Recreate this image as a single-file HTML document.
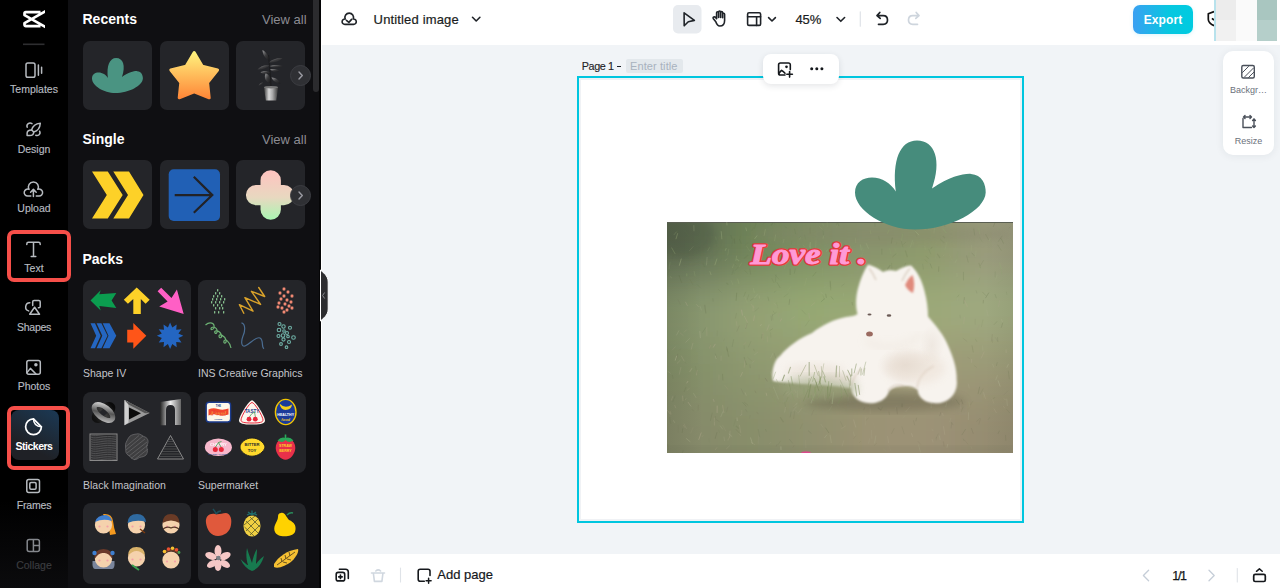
<!DOCTYPE html>
<html><head><meta charset="utf-8">
<style>
*{margin:0;padding:0;box-sizing:border-box}
html,body{width:1280px;height:588px;overflow:hidden;font-family:"Liberation Sans",sans-serif;background:#f1f4f7}
.a{position:absolute}
svg{display:block;overflow:hidden}
#side{z-index:5;left:0;top:0;width:68px;height:588px;background:linear-gradient(#000 0,#000 500px,#0b0b0d 588px)}
#panel{left:68px;top:0;width:251px;height:588px;background:#0f0f12}
.nl{position:absolute;left:0;width:68px;text-align:center;font-size:10.5px;color:#b7bbc0;line-height:12px;-webkit-text-stroke:0.15px currentColor}
.card{position:absolute;width:69px;height:69px;background:#242529;border-radius:7px;overflow:hidden}
.pk{position:absolute;width:108px;height:81px;background:#242529;border-radius:8px;overflow:hidden}
.ht{position:absolute;left:82px;font-size:14px;font-weight:bold;color:#fff;line-height:16px}
.va{position:absolute;left:262px;font-size:13px;color:#8c8c93;line-height:15px}
.pl{position:absolute;font-size:10.5px;color:#c4c5ca;line-height:12px;white-space:nowrap}
.nxt{position:absolute;width:21px;height:21px;border-radius:50%;background:#2f3034;border:1px solid #3c3d42}
#top{left:321px;top:0;width:959px;height:44.6px;background:#fff}
#bot{left:321px;top:554px;width:959px;height:34px;background:#fff}
</style></head><body>
<div id="side" class="a">
  <!-- logo -->
  <svg class="a" style="left:0;top:0" width="68" height="50" viewBox="0 0 68 50">
    <defs><clipPath id="lgc"><rect x="20" y="5" width="24.9" height="30"/></clipPath></defs><path clip-path="url(#lgc)" d="M40.5 12.1H25.9a1.4 1.4 0 0 0-1.4 1.4V15.1L46.5 27.6M40.5 26.1H25.9a1.4 1.4 0 0 1-1.4-1.4V23.1L46.5 10.6" fill="none" stroke="#fff" stroke-width="2.7" stroke-linejoin="round"/>
    <rect x="23" y="43.5" width="21.5" height="1.6" fill="#2e2e30"/>
  </svg>
  <!-- nav icons -->
  <svg class="a" style="left:0;top:0" width="68" height="588" viewBox="0 0 68 588" fill="none" stroke="#b7bbc0" stroke-width="1.5" stroke-linecap="round" stroke-linejoin="round">
    <!-- templates -->
    <rect x="26" y="63" width="9" height="14.3" rx="1.8"/>
    <path d="M38.4 65V75.3M41.6 67.3V73.2"/>
    <!-- design -->
    <path d="M27.2 127.2Q26.3 125 28.2 123.6Q30 122.5 32 123.6"/>
    <path d="M39.6 131.2Q40.8 133.6 38.8 135Q37.4 136 35.8 135.3"/>
    <path d="M40.3 123.2C36.2 123.6 32.6 126.2 31.6 129.9L33.7 132C37.4 131 40 127.4 40.3 123.2Z"/>
    <path d="M31.6 129.9C29 129.9 27.1 131 27.1 133.2V135.6H29.6C32 135.6 33.7 134.2 33.7 132"/>
    <!-- upload -->
    <path d="M30.8 196.1H27.7A3.5 3.5 0 1 1 29.05 189.37A5 5 0 1 1 37.75 189.37A3.5 3.5 0 1 1 39.1 196.1H36.3"/>
    <path d="M33.4 196.5V189.5M30.6 192.2L33.4 189.4L36.2 192.2"/>
    <!-- text -->
    <path d="M26.8 244.6V243.9Q26.8 242.3 28.4 242.3H38.6Q40.2 242.3 40.2 243.9V244.6M33.5 242.3V256.4M31.2 256.4H35.8"/>
    <!-- shapes -->
    <path d="M29.8 302.7A4.2 4.2 0 0 0 28.6 310.9"/>
    <path d="M32.7 305.6V301.8Q32.7 300.4 34.1 300.4H38.8Q40.2 300.4 40.2 301.8V306.4Q40.2 307.8 38.8 307.8H38.4"/>
    <path d="M34.6 307.2L39.5 314.3H29.7Z"/>
    <!-- photos -->
    <rect x="26.8" y="360.6" width="13.5" height="13.7" rx="2"/>
    <path d="M27 372.6L30.4 368.4L36.2 374.2"/>
    <circle cx="35.9" cy="364.8" r="1.75" fill="#b7bbc0" stroke="none"/>
    <!-- frames -->
    <rect x="26.8" y="479.5" width="12.7" height="13" rx="2"/>
    <rect x="29.8" y="482.6" width="6.3" height="6.6" rx="1.2"/>
  </svg>
  <div class="nl" style="top:83px">Templates</div>
  <div class="nl" style="top:143px">Design</div>
  <div class="nl" style="top:202px">Upload</div>
  <div class="nl" style="top:262px">Text</div>
  <div class="nl" style="top:320.8px;letter-spacing:-0.3px">Shapes</div>
  <div class="nl" style="top:380.2px">Photos</div>
  <!-- stickers active -->
  <div class="a" style="left:11px;top:410px;width:48px;height:50px;border-radius:8px;background:linear-gradient(30deg,#1f2126 30%,#1b3955 100%)"></div>
  <svg class="a" style="left:0;top:400px" width="68" height="60" viewBox="0 400 68 60" fill="none" stroke="#fff" stroke-width="1.7" stroke-linecap="round" stroke-linejoin="round">
    <path d="M41.4 426.8A7.9 7.9 0 1 1 33.5 418.9L41.4 426.8"/>
    <path d="M33.5 418.9Q33.6 426 41.4 426.8" stroke-width="1.5"/>
  </svg>
  <div class="nl" style="top:440px;color:#fff;font-weight:bold;font-size:10.5px;letter-spacing:-0.5px;-webkit-text-stroke:0">Stickers</div>
  <div class="nl" style="top:499px;letter-spacing:-0.2px">Frames</div>
  <!-- collage -->
  <svg class="a" style="left:0;top:530px" width="68" height="30" viewBox="0 530 68 30" fill="none" stroke="#85888d" stroke-width="1.5" stroke-linejoin="round">
    <rect x="27.2" y="539.4" width="12.2" height="12.1" rx="2"/>
    <path d="M33.4 539.6V551.4M33.4 545.6H39.3"/>
  </svg>
  <div class="nl" style="top:558.8px;color:#3c3d40">Collage</div>
  
  <!-- red highlight boxes -->
  <div class="a" style="left:7px;top:230px;width:64px;height:52px;border:4px solid #f64f49;border-radius:7px"></div>
  <div class="a" style="left:7px;top:406px;width:63px;height:63.6px;border:4px solid #f64f49;border-radius:7px"></div>
</div>

<div id="panel" class="a"></div>

<!-- scrollbar -->
<div class="a" style="left:313px;top:0;width:6px;height:92px;background:#2b2b2e;border-radius:0 0 3px 3px"></div>
<div class="a" style="left:319px;top:0;width:2px;height:588px;background:#050506"></div>
<!-- recents -->
<div class="card" style="left:83px;top:41px">
  <svg width="69" height="69" viewBox="0 0 131 89" style="position:absolute;left:9px;top:16.8px;width:51px;height:35px" preserveAspectRatio="none">
    <path d="M40.8 50.9C37 20 45 0 62 0C80 0 87 20 77 48C95 36 108 33 116 33.4C127 34 131 44 130.7 52C130 70 95 89 60 89C30 89 0 70 0 52C0 42 8 37 17 37C27 37 36 43 40.8 50.9Z" fill="#4a9482"/>
  </svg>
</div>
<div class="card" style="left:160px;top:41px">
  <svg class="a" style="left:0;top:0" width="69" height="69" viewBox="0 0 69 69">
    <defs><linearGradient id="stg" x1="0" y1="0" x2="0" y2="1"><stop offset="0" stop-color="#fff27c"/><stop offset=".45" stop-color="#ffc15e"/><stop offset="1" stop-color="#ff8838"/></linearGradient></defs>
    <path d="M34.2 11.5L42.3 25.2L57.6 29L47.6 41.5L49.2 56.8L34.2 50.8L19.2 56.8L20.8 41.5L10.8 29L26.1 25.2Z" fill="url(#stg)" stroke="url(#stg)" stroke-width="3" stroke-linejoin="round"/>
  </svg>
</div>
<div class="card" style="left:236px;top:41px">
  <svg class="a" style="left:0;top:0" width="69" height="69" viewBox="0 0 69 69">
    <defs>
      <linearGradient id="pot" x1="0" y1="0" x2="1" y2="0"><stop offset="0" stop-color="#3a3a3a"/><stop offset=".35" stop-color="#d8d8d8"/><stop offset=".6" stop-color="#aaa"/><stop offset="1" stop-color="#333"/></linearGradient>
      <linearGradient id="lf" x1="0" y1="0" x2="1" y2="1"><stop offset="0" stop-color="#9a9a9c"/><stop offset=".5" stop-color="#3a3a3c"/><stop offset="1" stop-color="#1a1a1c"/></linearGradient>
    </defs>
    <path d="M35 46C34.5 36 33.5 24 32.5 14" stroke="#1c1c1e" stroke-width="1.2" fill="none"/>
    <g fill="url(#lf)">
      <path d="M26.5 9C30 11 33 15 33 19.5C29.5 18 26.5 13 26.5 9Z"/>
      <path d="M33 21.5C36 18 42 16.5 46.5 17C43.5 20.5 37.5 22 33 21.5Z"/>
      <path d="M21.5 28.5C24.5 25 29.5 23.5 33.5 24.5C30 27.5 25.5 29 21.5 28.5Z"/>
      <path d="M33.5 25C37 23.5 43 23.5 47 25C43 27 37.5 27 33.5 25Z"/>
      <path d="M24.5 31.5C27 29.5 31 29.5 34 31.5C31 33.5 27.5 33.5 24.5 31.5Z"/>
      <path d="M34 28.5C37 27.5 41 28 43.5 30C40.5 31.5 36.5 31 34 28.5Z"/>
      <path d="M29.5 32.5C33 33 35 37 34 42C30.5 41.5 27.5 37.5 29.5 32.5Z"/>
      <path d="M35.5 36.5C39 36 43 39 44.5 42.5C40.5 42.5 37 40 35.5 36.5Z"/>
      <path d="M22.5 44.5C23.5 42.5 25 41.5 27 41.5C26 43.5 24.5 44.5 22.5 44.5Z"/>
    </g>
    <path d="M27.9 46H42.2L40.3 59.6H29.8Z" fill="url(#pot)"/>
    <ellipse cx="35" cy="46.2" rx="7.1" ry="1.3" fill="#777"/>
  </svg>
</div>
<div class="nxt" style="left:290px;top:64.5px"><svg width="19" height="19" viewBox="0 0 19 19"><path d="M8 6L11.3 9.5L8 13" fill="none" stroke="#9b9ba3" stroke-width="1.4" stroke-linecap="round" stroke-linejoin="round"/></svg></div>
<!-- single -->
<div class="card" style="left:83px;top:160px">
  <svg class="a" style="left:0;top:0" width="69" height="69" viewBox="83 160 69 69">
    <path d="M92 171.6H107.8L122.7 195.1L107.8 218.6H92L106.8 195.1Z M113.3 171.6H129L143.5 195.1L129 218.6H113.3L128 195.1Z" fill="#fdd128"/>
  </svg>
</div>
<div class="card" style="left:160px;top:160px">
  <svg class="a" style="left:0;top:0" width="69" height="69" viewBox="160 160 69 69">
    <rect x="168.7" y="169.3" width="51.3" height="51.7" rx="5" fill="#2160b5"/>
    <path d="M174.7 195.1H212.5M193.8 176.8L212.3 195.1L193.8 212.8" fill="none" stroke="#222226" stroke-width="2.2"/>
  </svg>
</div>
<div class="card" style="left:236px;top:160px">
  <svg class="a" style="left:0;top:0" width="69" height="69" viewBox="236 160 69 69">
    <defs><linearGradient id="flw" x1="0" y1="0" x2="0" y2="1"><stop offset="0" stop-color="#ffc3c0"/><stop offset=".55" stop-color="#e8d8c0"/><stop offset="1" stop-color="#a9f7b2"/></linearGradient></defs>
    <path d="M260.5 180.5V180.5A10.2 10.2 0 0 1 280.9 180.5V185H284A10.1 10.1 0 0 1 284 205.2H280.9V209.5A10.2 10.2 0 0 1 260.5 209.5V205.2H256A10.1 10.1 0 0 1 256 185H260.5Z" fill="url(#flw)"/>
  </svg>
</div>
<div class="nxt" style="left:290px;top:184.5px"><svg width="19" height="19" viewBox="0 0 19 19"><path d="M8 6L11.3 9.5L8 13" fill="none" stroke="#9b9ba3" stroke-width="1.4" stroke-linecap="round" stroke-linejoin="round"/></svg></div>
<!-- packs -->
<div class="pk" style="left:83px;top:280px"><svg class="a" style="left:0;top:0" width="108" height="81" viewBox="0 0 108 81">
<polygon points="7.5,20.4 17.7,10.2 16.3,14.3 33.3,12.9 28.6,20.4 33.3,27.9 16.3,25.9 17.7,30.6" fill="#0b9d4f"/>
<polygon points="53.7,7.5 40.8,19.7 44.9,23.8 50.3,19 50.3,34 57.8,34 57.8,19 62.6,23.8 66.7,19.7" fill="#fdd128"/>
<polygon points="74.6,11.2 78.2,7.8 88.5,18 93.9,9.5 100.7,34 76.2,26.5 84.6,21.5" fill="#ff5fc5"/>
<path d="M7.5 43.3H12L17.7 55.8L12 68.3H7.5L13.2 55.8Z M13.6 43.3H18.4L24.5 55.8L18.4 68.3H13.6L19.3 55.8Z M19.7 43.3H26.5L33.3 55.8L26.5 68.3H19.7L25.5 55.8Z" fill="#2466c2"/>
<polygon points="44.2,49.7 50.3,49.7 50.3,42.9 63.3,55.8 50.3,68.7 50.3,62.6 44.2,62.6" fill="#ff5518"/>
<polygon points="87.1,42.6 89.3,47.5 93.7,44.4 93.2,49.7 98.5,49.2 95.4,53.6 100.3,55.8 95.4,58.0 98.5,62.4 93.2,61.9 93.7,67.2 89.3,64.1 87.1,69.0 84.9,64.1 80.5,67.2 81.0,61.9 75.7,62.4 78.8,58.0 73.9,55.8 78.8,53.6 75.7,49.2 81.0,49.7 80.5,44.4 84.9,47.5" fill="#2466c2"/>
</svg></div>
<div class="pk" style="left:198px;top:280px"><svg class="a" style="left:0;top:0" width="108" height="81" viewBox="0 0 108 81">
<g fill="#86c08e"><rect x="19" y="9" width="1.3" height="2.6" rx=".6"/><rect x="17" y="12" width="1.3" height="2.6" rx=".6"/><rect x="21" y="12" width="1.3" height="2.6" rx=".6"/><rect x="15" y="15" width="1.3" height="2.6" rx=".6"/><rect x="19" y="15" width="1.3" height="2.6" rx=".6"/><rect x="23" y="15" width="1.3" height="2.6" rx=".6"/><rect x="14" y="18" width="1.3" height="2.6" rx=".6"/><rect x="18" y="18" width="1.3" height="2.6" rx=".6"/><rect x="22" y="18" width="1.3" height="2.6" rx=".6"/><rect x="26" y="18" width="1.3" height="2.6" rx=".6"/><rect x="13" y="21" width="1.3" height="2.6" rx=".6"/><rect x="17" y="21" width="1.3" height="2.6" rx=".6"/><rect x="21" y="21" width="1.3" height="2.6" rx=".6"/><rect x="25" y="21" width="1.3" height="2.6" rx=".6"/><rect x="15" y="24" width="1.3" height="2.6" rx=".6"/><rect x="19" y="24" width="1.3" height="2.6" rx=".6"/><rect x="23" y="24" width="1.3" height="2.6" rx=".6"/><rect x="17" y="27" width="1.3" height="2.6" rx=".6"/><rect x="21" y="27" width="1.3" height="2.6" rx=".6"/><rect x="24" y="27" width="1.3" height="2.6" rx=".6"/><rect x="16" y="31" width="1.3" height="2.6" rx=".6"/><rect x="20" y="31" width="1.3" height="2.6" rx=".6"/><rect x="25" y="31" width="1.3" height="2.6" rx=".6"/></g>
<path d="M45.8 33.3L41.4 24.7L55 31.2L46.9 17.6L62.6 24.4L53.4 11.3L66.7 16.5L60.7 7.5" fill="none" stroke="#d9a22a" stroke-width="1.4" stroke-linejoin="round" stroke-linecap="round"/>
<g stroke="#f38a74" stroke-width="1.4" fill="none"><path d="M84.8 7.8L87.2 10.2M87.2 7.8L84.8 10.2"/><path d="M80.8 11.8L83.2 14.2M83.2 11.8L80.8 14.2"/><path d="M88.8 10.8L91.2 13.2M91.2 10.8L88.8 13.2"/><path d="M84.8 14.8L87.2 17.2M87.2 14.8L84.8 17.2"/><path d="M92.8 14.8L95.2 17.2M95.2 14.8L92.8 17.2"/><path d="M81.8 17.8L84.2 20.2M84.2 17.8L81.8 20.2"/><path d="M87.8 18.8L90.2 21.2M90.2 18.8L87.8 21.2"/><path d="M91.8 20.8L94.2 23.2M94.2 20.8L91.8 23.2"/><path d="M79.8 21.8L82.2 24.2M82.2 21.8L79.8 24.2"/><path d="M85.8 22.8L88.2 25.2M88.2 22.8L85.8 25.2"/><path d="M89.8 24.8L92.2 27.2M92.2 24.8L89.8 27.2"/><path d="M82.8 26.8L85.2 29.2M85.2 26.8L82.8 29.2"/><path d="M87.8 28.8L90.2 31.2M90.2 28.8L87.8 31.2"/><path d="M92.8 26.8L95.2 29.2M95.2 26.8L92.8 29.2"/><path d="M84.8 30.8L87.2 33.2M87.2 30.8L84.8 33.2"/><path d="M78.8 25.8L81.2 28.2M81.2 25.8L78.8 28.2"/></g>
<path d="M7.5 45C12 41 17 43 16 48C13 52 11 47 16 47C21 49 19 55 17 53C15 50 21 50 23 54C25 58 21 59 21 56C21 53 27 56 28 60C29 64 25 64 26 61C27 58 32 62 33 68" fill="none" stroke="#6cb073" stroke-width="1.2"/>
<path d="M43.5 42.9C48 44 47 52 45 56C43 61 43 67 47 66C52 64 58 56 62 58C66 60 63 67 66 68.7" fill="none" stroke="#4b6d92" stroke-width="1.2"/>
<g fill="none" stroke="#6fb0a6" stroke-width="1.1"><circle cx="81.5" cy="44" r="1.5"/><circle cx="85.5" cy="46.5" r="1.7"/><circle cx="92" cy="47.8" r="1.5"/><circle cx="81" cy="50" r="1.8"/><circle cx="86" cy="51" r="1.3"/><circle cx="89" cy="53" r="1.5"/><circle cx="80.5" cy="56" r="1.5"/><circle cx="85" cy="55.5" r="1.8"/><circle cx="90" cy="56.5" r="1.3"/><circle cx="95.5" cy="57.5" r="1.8"/><circle cx="85.5" cy="59.5" r="1.6"/><circle cx="91" cy="62" r="1.5"/><circle cx="83" cy="64" r="1.4"/><circle cx="88.5" cy="67.2" r="1.3"/></g>
</svg></div>
<div class="pl" style="left:83px;top:367.4px">Shape IV</div>
<div class="pl" style="left:198px;top:367.4px">INS Creative Graphics</div>
<div class="pk" style="left:83px;top:392px"><svg class="a" style="left:0;top:0" width="108" height="81" viewBox="0 0 108 81">
<defs>
<linearGradient id="g3a" x1="0" y1="0" x2="1" y2="1"><stop offset="0" stop-color="#d8d8d8"/><stop offset=".5" stop-color="#333"/><stop offset="1" stop-color="#bbb"/></linearGradient>
<linearGradient id="g3c" x1="0" y1="0" x2="1" y2="1"><stop offset="0" stop-color="#d8d8d8"/><stop offset=".5" stop-color="#555"/><stop offset="1" stop-color="#bbb"/></linearGradient><linearGradient id="g3d" x1="0" y1="0" x2="1" y2="0"><stop offset="0" stop-color="#111"/><stop offset=".5" stop-color="#3a3a3a"/><stop offset="1" stop-color="#0a0a0a"/></linearGradient><linearGradient id="g3b" x1="0" y1="0" x2="1" y2="0"><stop offset="0" stop-color="#222"/><stop offset=".5" stop-color="#eee"/><stop offset="1" stop-color="#666"/></linearGradient>
</defs>
<ellipse cx="20.5" cy="20.5" rx="11" ry="5.5" transform="rotate(-38 20.5 20.5)" fill="none" stroke="url(#g3d)" stroke-width="5"/>
<ellipse cx="20.5" cy="20.5" rx="11" ry="5.5" transform="rotate(38 20.5 20.5)" fill="none" stroke="url(#g3c)" stroke-width="5"/>
<path d="M41.5 8L66.7 21L41.5 33.3Z" fill="#9a9a9a"/>
<path d="M41.5 8L45.5 10L45.5 30.5L41.5 33.3Z" fill="#d0d0d0"/>
<path d="M46 15.5V27.5L58 21.3Z" fill="#0b0b0b"/>
<path d="M41.5 8L66.7 21L62 21.2L45.5 12.5Z" fill="#555"/>
<path d="M77 10L98 7V33L92 33V18Q92 13 87.5 13Q83 13 83 18V33.3H77Z" fill="url(#g3b)"/>
<rect x="7" y="42" width="27" height="26.5" fill="#2a2a2c" stroke="#8a8a8a" stroke-width="1"/>
<path d="M8 44.0C14 42.0 20 46.0 33 44.0M8 45.8C14 43.8 20 47.8 33 45.8M8 47.6C14 45.6 20 49.6 33 47.6M8 49.4C14 47.4 20 51.4 33 49.4M8 51.2C14 49.2 20 53.2 33 51.2M8 53.0C14 51.0 20 55.0 33 53.0M8 54.8C14 52.8 20 56.8 33 54.8M8 56.6C14 54.6 20 58.6 33 56.6M8 58.4C14 56.4 20 60.4 33 58.4M8 60.2C14 58.2 20 62.2 33 60.2M8 62.0C14 60.0 20 64.0 33 62.0M8 63.8C14 61.8 20 65.8 33 63.8M8 65.6C14 63.6 20 67.6 33 65.6M8 67.4C14 65.4 20 69.4 33 67.4" stroke="#6a6a6c" stroke-width=".6" fill="none"/>
<path d="M53.5 42C57 41 59 44 62 45C65 46 66 50 64 53C63 56 66 59 63 63C60 66 57 64 54 67C50 69 48 65 45 63C42 61 43 58 42.5 55C42 51 44 49 45.5 46C47 43 50 42.5 53.5 42Z" fill="#3e3e40" stroke="#6a6a6c" stroke-width=".8"/>
<path d="M43 58L60 44M44 61L62 47M46 64L64 50M48 66.5L65 53M43 54.5L56 43.5M51 68L65 57" stroke="#7a7a7c" stroke-width=".5"/>
<path d="M87.5 43.5L74.5 67H100.5Z" fill="none" stroke="#8a8a8a" stroke-width="1"/>
<path d="M85.5 47.5H89.5M84.5 49.5H90.5M83 52H92M81.8 54.5H93.2M80.5 57H94.5M79 59.5H96M77.8 62H97.2M76.5 64.5H98.5" stroke="#5e5e60" stroke-width=".6"/>
</svg></div>
<div class="pk" style="left:198px;top:392px"><svg class="a" style="left:0;top:0" width="108" height="81" viewBox="0 0 108 81">
<g font-family="Liberation Sans" font-weight="bold" text-anchor="middle">
<rect x="8.2" y="10.2" width="24.4" height="19.8" rx="3" fill="#fdf8ea" stroke="#1a3a8c" stroke-width="1.4"/>
<text x="20.4" y="14.6" font-size="2.6" fill="#1a3a8c">THE</text>
<path d="M10.5 17.5Q15 15.5 20 17Q25 18.5 30.5 16.5V22.5Q25 24.5 20 23Q15 21.5 10.5 23.5Z" fill="#f2462c"/>
<text x="20.4" y="23" font-size="7" font-style="italic" font-family="Liberation Serif" fill="#ffd23a" stroke="#e8283b" stroke-width=".3">Food</text>
<text x="20.4" y="27.8" font-size="2.2" fill="#1a3a8c">HOUSE</text>
<path d="M54 8.2C57 8.2 67 24 67 28.5C67 31.5 63 32.6 54 32.6C45 32.6 41 31.5 41 28.5C41 24 51 8.2 54 8.2Z" fill="#fdf6ee"/>
<path d="M54 10.5C56.5 10.5 65 24.5 65 28C65 30.3 62 31 54 31C46 31 43 30.3 43 28C43 24.5 51.5 10.5 54 10.5Z" fill="none" stroke="#e8283b" stroke-width="1"/>
<text x="54" y="21" font-size="4.6" fill="#1f3d8f">TASTY</text>
<path d="M51 25.5Q53 21.5 56.5 20M56.5 20Q57 23 57.5 25.5" stroke="#3a9a4a" stroke-width=".7" fill="none"/>
<circle cx="51" cy="27.2" r="2.4" fill="#e8283b"/><circle cx="57.3" cy="27.2" r="2.4" fill="#e8283b"/>
<ellipse cx="87.7" cy="20" rx="10.3" ry="12.6" fill="#1b3b9a" stroke="#f2c500" stroke-width="1.4"/>
<path d="M81.5 11.5Q87 17.5 94 12.5Q93.5 17.5 87.5 18Q82.5 17.5 81.5 11.5Z" fill="#f7cf1b"/>
<text x="87.7" y="23.5" font-size="3.6" fill="#fff">HEALTHY</text>
<text x="87.7" y="28.5" font-size="4" fill="#f7cf1b" font-style="italic">food</text>
<ellipse cx="20.4" cy="55.2" rx="13.5" ry="8.8" fill="#f7b9cc"/>
<text x="20.4" y="54" font-size="4" fill="#fff" opacity=".9">CHERRY</text>
<circle cx="17.3" cy="57.5" r="2.5" fill="#e8283b"/><circle cx="23.3" cy="57.5" r="2.5" fill="#e8283b"/>
<path d="M17.5 55L20.5 50.5L23 55M20.5 50.5L23.5 49.5" stroke="#3a9a4a" fill="none" stroke-width=".8"/>
<text x="20.4" y="62.5" font-size="1.8" fill="#3a5aa0">EST 2023 • SO SWEET</text>
<path d="M42 55C42 50.5 48 46 54 46C60 46 66 50 67 55C66 60 60 64.2 54 64.2C48 64.2 42 59.5 42 55Z" fill="#ffd92c" stroke="#1e1e1e" stroke-width=".9"/>
<text x="54" y="54" font-size="4.2" fill="#2a2a2a">BITTER</text>
<text x="54" y="60" font-size="4.2" fill="#2a2a2a">TOY</text>
<path d="M87.5 46C93 46 97.3 50 97.3 56C97.3 62 92 67.8 87.5 67.8C83 67.8 77.7 62 77.7 56C77.7 50 82 46 87.5 46Z" fill="#e8304a"/>
<path d="M79.5 48.5Q83.5 44 87.5 46Q91.5 44 95.5 48.5Q90.5 51.5 87.5 48Q84.5 51.5 79.5 48.5Z" fill="#2aa85a"/>
<path d="M87.5 46V42.5" stroke="#2aa85a" stroke-width="1.6"/>
<text x="87.5" y="55" font-size="3.6" fill="#fdd128">STRAW</text>
<text x="87.5" y="59.5" font-size="3.6" fill="#fdd128">BERRY</text>
</g>
</svg></div>
<div class="pl" style="left:83px;top:479.3px">Black Imagination</div>
<div class="pl" style="left:198px;top:479.3px">Supermarket</div>
<div class="pk" style="left:83px;top:503px"><svg class="a" style="left:0;top:0" width="108" height="81" viewBox="0 0 108 81"><path d="M20 11Q29 10 30 18Q31 26 33 31L27 32Q26 24 24 20Z" fill="#f59a1f"/><circle cx="20.5" cy="22" r="8.6" fill="#f5d2ad"/><circle cx="16.5" cy="23.5" r="1.1" fill="#f5a0a8"/><circle cx="24.5" cy="23.5" r="1.1" fill="#f5a0a8"/><path d="M12 19Q14 12 23 12Q28 13 29 18Q20 15 12 19Z" fill="#3f7fcf"/><circle cx="53.5" cy="22" r="8.6" fill="#f5d2ad"/><circle cx="49.5" cy="23.5" r="1.1" fill="#f5a0a8"/><circle cx="57.5" cy="23.5" r="1.1" fill="#f5a0a8"/><path d="M44.5 20Q45 11 54 11Q62 11 63 19Q54 16 44.5 20Z" fill="#2f6aa0"/><path d="M57 26L62 30" stroke="#7a3a10" stroke-width="1.4"/><circle cx="88" cy="22" r="8.6" fill="#f5d2ad"/><circle cx="84" cy="23.5" r="1.1" fill="#f5a0a8"/><circle cx="92" cy="23.5" r="1.1" fill="#f5a0a8"/><path d="M79.5 20Q80 11 88 11Q96 11 96.5 20Q88 15 79.5 20Z" fill="#6a3b26"/><path d="M80 26Q84 23 88 25Q92 23 96 26" stroke="#5a3a2a" stroke-width="1.3" fill="none"/><path d="M9.5 58Q9 66 12 66H29Q32 66 31.5 58Z" fill="#8a96b0" opacity=".85"/><circle cx="20.5" cy="56" r="8.6" fill="#f5d2ad"/><circle cx="16.5" cy="57.5" r="1.1" fill="#f5a0a8"/><circle cx="24.5" cy="57.5" r="1.1" fill="#f5a0a8"/><path d="M11.5 56Q11 46 20.5 46Q30 46 29.5 56Q25 49 20.5 50Q16 49 11.5 56Z" fill="#6b3a2a"/><circle cx="11.5" cy="50" r="2.2" fill="#3f7fcf"/><circle cx="29.5" cy="50" r="2.2" fill="#3f7fcf"/><circle cx="53.5" cy="55" r="8.6" fill="#f5d2ad"/><circle cx="49.5" cy="56.5" r="1.1" fill="#f5a0a8"/><circle cx="57.5" cy="56.5" r="1.1" fill="#f5a0a8"/><path d="M45 53Q45 44 53.5 44Q62 44 62 53Q58 48 53.5 48Q49 48 45 53Z" fill="#d9b26a"/><path d="M49 62L56 67" stroke="#3aa050" stroke-width="2"/><circle cx="88" cy="57" r="8.6" fill="#f5d2ad"/><circle cx="84" cy="58.5" r="1.1" fill="#f5a0a8"/><circle cx="92" cy="58.5" r="1.1" fill="#f5a0a8"/><path d="M80.5 50Q88 44 96 50" stroke="#6a3b26" stroke-width="2.5" fill="none"/><circle cx="81.5" cy="48.5" r="1.8" fill="#f5c030"/><circle cx="85.5" cy="46" r="1.8" fill="#e85030"/><circle cx="89.5" cy="45.2" r="1.8" fill="#f5c030"/><circle cx="93.5" cy="46.8" r="1.8" fill="#e85030"/><circle cx="96" cy="49.5" r="1.4" fill="#4aa050"/></svg></div>
<div class="pk" style="left:198px;top:503px"><svg class="a" style="left:0;top:0" width="108" height="81" viewBox="0 0 108 81">
<path d="M8 20C7 13 12 10 17 11C21 12 24 10 28 10C33 11 34 17 33 22C32 29 26 33 20 33C13 33 9 27 8 20Z" fill="#e0593c"/>
<path d="M18 11Q17 8 15 6M18 11Q20 8 23 8" stroke="#1f4f5a" stroke-width="1.6" fill="none"/>
<ellipse cx="54" cy="23" rx="8.5" ry="10.5" fill="#f0d043"/>
<path d="M48 18L60 30M46.5 24L56 33M52 14L62 24M60 16L48 28M62 22L52 32M57 13L46 22" stroke="#5a5a2a" stroke-width=".8"/>
<path d="M49 12Q54 9 59 12M54 12V7.5M50 9L54 12L58 9" stroke="#1f6a6a" stroke-width="1.3" fill="none"/>
<path d="M83 10C87 9 88 14 91 17C96 19 99 23 97 29C95 33 88 34 83 33C77 32 75 27 77 22C78 19 80 17 80 14C80 11 81 10 83 10Z" fill="#ffd200"/>
<path d="M89 12Q92 9 95 10" stroke="#2a8a5a" stroke-width="1.5" fill="none"/>
<g fill="#f6c8c6"><ellipse cx="20" cy="48" rx="3.5" ry="6"/><ellipse cx="20" cy="62" rx="3.5" ry="6"/><ellipse cx="13" cy="53" rx="6" ry="3.5" transform="rotate(20 13 53)"/><ellipse cx="27" cy="53" rx="6" ry="3.5" transform="rotate(-25 27 53)"/><ellipse cx="14" cy="61" rx="5.5" ry="3.2" transform="rotate(-30 14 61)"/><ellipse cx="27" cy="61" rx="5.5" ry="3.2" transform="rotate(30 27 61)"/></g>
<circle cx="20.5" cy="55" r="2.2" fill="#7a7f85"/>
<path d="M54 68C49 66 45 62 42.5 56C47 60 49 62 50 62C48 56 48 50 49 45C51 52 53 57 54 60C55 54 57 49 59 46C59 52 58 58 58 61C60 58 63 55 66 53C64 60 60 66 54 68Z" fill="#177a4f"/>
<path d="M76 61C80 54 90 47 100 46C101 48 99 53 94 58C88 63 80 66 76 64Z" fill="#f6c032"/>
<path d="M79 62L97 49M84 59L83 55M88 56L87 52M92 53L91 49M85 59L89 60M89 56L93 57" stroke="#4a3a1a" stroke-width=".8"/>
</svg></div>
<div class="ht" style="top:10.9px;left:82.5px">Recents</div>
<div class="va" style="top:12px">View all</div>
<div class="ht" style="top:130.7px;left:82.5px">Single</div>
<div class="va" style="top:132px">View all</div>
<div class="ht" style="top:250.7px;left:82.5px">Packs</div>

<div id="top" class="a"></div>
<!-- top bar content -->
<svg class="a" style="left:321px;top:0" width="959" height="44" viewBox="321 0 959 44" fill="none" stroke="#1f2328" stroke-width="1.6" stroke-linecap="round" stroke-linejoin="round">
  <path d="M344.8 24.4A2.7 2.7 0 1 1 345.22 19.03A4.3 4.3 0 1 1 353.18 19.03A2.7 2.7 0 1 1 353.6 24.4Z"/>
  <path d="M346.4 20.3L348.9 22.4L351.6 19.4"/>
  <path d="M472.5 17.3L476.2 21L479.9 17.3"/>
  <rect x="673" y="5" width="28.5" height="28.5" rx="5" fill="#e8ebef" stroke="none"/>
  <path d="M684.1 12.8L694.4 20.4L688.3 21.7L684.2 25.8Z"/>
  <path d="M715.8 21.8L713.4 18.8Q712.6 17.6 713.8 17Q714.8 16.6 715.6 17.5L716.6 18.7V12.8Q716.6 11.8 717.6 11.8Q718.6 11.8 718.6 12.8V17.5V12Q718.6 11 719.6 11Q720.6 11 720.6 12V17.5V12.6Q720.6 11.6 721.6 11.6Q722.6 11.6 722.6 12.6V17.8V14.2Q722.6 13.3 723.6 13.3Q724.6 13.3 724.6 14.2V20.5Q724.6 26 719.8 26Q717.2 26 715.8 21.8Z"/>
  <rect x="747.6" y="12.8" width="13" height="12.6" rx="1.4"/>
  <path d="M747.6 16.8H760.6M756.6 16.8V25.4"/>
  <path d="M768.6 17.6L772 21L775.4 17.6"/>
  <path d="M837 17.5L840.8 21.3L844.6 17.5"/>
  <path d="M860.3 11.8V26.2" stroke="#dfe3e8" stroke-width="1.2"/>
  <path d="M879.8 12.5L877 15.6L880.2 18.4M877.3 15.6H883.2Q887.5 15.6 887.5 20Q887.5 24.3 883.2 24.3H878.5" stroke-width="1.7"/>
  <path d="M916.2 12.5L919 15.6L915.8 18.4M918.7 15.6H912.8Q908.5 15.6 908.5 20Q908.5 24.3 912.8 24.3H917.5" stroke="#ced5dd" stroke-width="1.7"/>
</svg>
<div class="a" style="left:373.6px;top:11.6px;font-size:13px;color:#1a1d21;line-height:16px;letter-spacing:0.15px;-webkit-text-stroke:0.2px #1a1d21">Untitled image</div>
<div class="a" style="left:795.4px;top:11.7px;font-size:13px;color:#1a1d21;line-height:16px;letter-spacing:0px;-webkit-text-stroke:0.2px #1a1d21">45%</div>
<div class="a" style="left:1133px;top:5px;width:60px;height:28.5px;border-radius:7px;background:linear-gradient(90deg,#3aa0f2,#06c7e0 60%,#00cbe0);box-shadow:0 1px 4px rgba(0,190,230,.15)"></div>
<div class="a" style="left:1133px;top:12.6px;width:60px;text-align:center;font-size:12px;font-weight:bold;color:#fff;line-height:15px;letter-spacing:0.1px">Export</div>
<svg class="a" style="left:1200px;top:0" width="20" height="44" viewBox="1200 0 20 44" fill="none" stroke="#111" stroke-width="1.7" stroke-linejoin="round">
  <path d="M1214 11.6L1208.3 13.8V19.2Q1208.3 23.2 1214 25.6M1211.9 18.4L1214 20"/>
</svg>
<!-- thumbnail overlay -->
<div class="a" style="left:1214px;top:0;width:66px;height:41px;background:#fff">
  <div class="a" style="left:0;top:0;width:2px;height:41px;background:#b8e2ec"></div>
  <div class="a" style="left:2px;top:0;width:20px;height:20px;background:#ececec"></div>
  <div class="a" style="left:2px;top:20px;width:20px;height:21px;background:#f1f1f1"></div>
  <div class="a" style="left:22px;top:0;width:21px;height:41px;background:#fafafa"></div>
  <div class="a" style="left:43px;top:0;width:20px;height:20px;background:#a9c6c0"></div>
  <div class="a" style="left:43px;top:20px;width:20px;height:21px;background:#b5cfca"></div>
</div>


<!-- canvas -->
<div class="a" style="left:321px;top:44px;width:1px;height:510px;background:#fff"></div>
<svg class="a" style="left:318px;top:266px" width="14" height="60" viewBox="318 266 14 60"><path d="M320.5 270C323 272.5 328.2 275.5 328.2 282V309C328.2 315.5 323 318.5 320.5 321Z" fill="#2c2c2f" stroke="#fff" stroke-width="1"/><path d="M324.6 292.5L322.6 295.5L324.6 298.5" fill="none" stroke="#8a8a90" stroke-width="1"/></svg>
<div class="a" style="left:581.8px;top:60px;font-size:10.8px;color:#1f2328;line-height:13px;letter-spacing:-0.4px;-webkit-text-stroke:0.15px #1f2328">Page 1</div><div class="a" style="left:616.8px;top:66px;width:4.5px;height:1.3px;background:#1f2328"></div>
<div class="a" style="left:625.5px;top:59px;width:57px;height:13.5px;background:#e3e8ec;border-radius:2px"></div>
<div class="a" style="left:630px;top:60px;font-size:11px;color:#a8b2be;line-height:13px;letter-spacing:0.1px">Enter title</div>
<div class="a" style="left:577px;top:76px;width:447px;height:447px;background:#fff;border:2px solid #00c6df"></div>
<div class="a" style="left:579px;top:78px;width:443px;height:443px;border:2px solid #f0f2f5"></div>

<!-- photo -->
<svg class="a" style="left:667px;top:222px" width="346" height="231" viewBox="667 222 346 231">
  <defs>
    <linearGradient id="gr" x1="0" y1="0" x2="0" y2="1">
      <stop offset="0" stop-color="#65705a"/>
      <stop offset=".04" stop-color="#748161"/>
      <stop offset=".16" stop-color="#809365"/>
      <stop offset=".35" stop-color="#93a472"/>
      <stop offset=".5" stop-color="#99a27b"/>
      <stop offset=".65" stop-color="#9b9879"/>
      <stop offset=".8" stop-color="#948b70"/>
      <stop offset=".92" stop-color="#88886c"/>
      <stop offset="1" stop-color="#797b61"/>
    </linearGradient>
    <linearGradient id="vigl" x1="0" y1="0" x2="1" y2="0">
      <stop offset="0" stop-color="#2a3020" stop-opacity=".12"/>
      <stop offset=".1" stop-color="#2a3020" stop-opacity="0"/>
      <stop offset=".92" stop-color="#2a3020" stop-opacity="0"/>
      <stop offset="1" stop-color="#2a3020" stop-opacity=".06"/>
    </linearGradient>
    <radialGradient id="brn" cx=".5" cy=".5" r=".5">
      <stop offset="0" stop-color="#9c8e72" stop-opacity=".85"/>
      <stop offset="1" stop-color="#9c8e72" stop-opacity="0"/>
    </radialGradient>
    <radialGradient id="bei" cx=".5" cy=".5" r=".5">
      <stop offset="0" stop-color="#a29c82" stop-opacity=".8"/>
      <stop offset="1" stop-color="#a29c82" stop-opacity="0"/>
    </radialGradient>
    <radialGradient id="grn" cx=".5" cy=".5" r=".5">
      <stop offset="0" stop-color="#86a062" stop-opacity=".7"/>
      <stop offset="1" stop-color="#86a062" stop-opacity="0"/>
    </radialGradient>
    <radialGradient id="dgr" cx=".5" cy=".5" r=".5">
      <stop offset="0" stop-color="#66744e" stop-opacity=".7"/>
      <stop offset="1" stop-color="#66744e" stop-opacity="0"/>
    </radialGradient>
    <radialGradient id="gry" cx=".5" cy=".5" r=".5">
      <stop offset="0" stop-color="#929274" stop-opacity=".7"/>
      <stop offset="1" stop-color="#929274" stop-opacity="0"/>
    </radialGradient>
    <filter id="blg" x="550" y="100" width="600" height="460" filterUnits="userSpaceOnUse"><feGaussianBlur stdDeviation="22"/></filter>
    <filter id="bl1" x="-20%" y="-20%" width="140%" height="140%"><feGaussianBlur stdDeviation="1"/></filter>
    <filter id="bl3" x="-20%" y="-20%" width="140%" height="140%"><feGaussianBlur stdDeviation="4"/></filter>
    <radialGradient id="dogsh" cx=".5" cy=".5" r=".5">
      <stop offset="0" stop-color="#ddd0c4" stop-opacity=".9"/>
      <stop offset="1" stop-color="#ddd0c4" stop-opacity="0"/>
    </radialGradient>
  </defs>
  <g filter="url(#blg)"><rect x="609.3" y="164.2" width="58.7" height="58.8" fill="#5e6c52"/><rect x="667.0" y="164.2" width="58.7" height="58.8" fill="#5e6c52"/><rect x="724.7" y="164.2" width="58.7" height="58.8" fill="#708458"/><rect x="782.3" y="164.2" width="58.7" height="58.8" fill="#7d8e63"/><rect x="840.0" y="164.2" width="58.7" height="58.8" fill="#88926d"/><rect x="897.7" y="164.2" width="58.7" height="58.8" fill="#8c996b"/><rect x="955.3" y="164.2" width="58.7" height="58.8" fill="#99997c"/><rect x="1013.0" y="164.2" width="58.7" height="58.8" fill="#99997c"/><rect x="609.3" y="222.0" width="58.7" height="58.8" fill="#5e6c52"/><rect x="667.0" y="222.0" width="58.7" height="58.8" fill="#5e6c52"/><rect x="724.7" y="222.0" width="58.7" height="58.8" fill="#708458"/><rect x="782.3" y="222.0" width="58.7" height="58.8" fill="#7d8e63"/><rect x="840.0" y="222.0" width="58.7" height="58.8" fill="#88926d"/><rect x="897.7" y="222.0" width="58.7" height="58.8" fill="#8c996b"/><rect x="955.3" y="222.0" width="58.7" height="58.8" fill="#99997c"/><rect x="1013.0" y="222.0" width="58.7" height="58.8" fill="#99997c"/><rect x="609.3" y="279.8" width="58.7" height="58.8" fill="#88976f"/><rect x="667.0" y="279.8" width="58.7" height="58.8" fill="#88976f"/><rect x="724.7" y="279.8" width="58.7" height="58.8" fill="#95a377"/><rect x="782.3" y="279.8" width="58.7" height="58.8" fill="#97ab75"/><rect x="840.0" y="279.8" width="58.7" height="58.8" fill="#9bab77"/><rect x="897.7" y="279.8" width="58.7" height="58.8" fill="#9dab79"/><rect x="955.3" y="279.8" width="58.7" height="58.8" fill="#9fab80"/><rect x="1013.0" y="279.8" width="58.7" height="58.8" fill="#9fab80"/><rect x="609.3" y="337.5" width="58.7" height="58.8" fill="#849069"/><rect x="667.0" y="337.5" width="58.7" height="58.8" fill="#849069"/><rect x="724.7" y="337.5" width="58.7" height="58.8" fill="#8e996f"/><rect x="782.3" y="337.5" width="58.7" height="58.8" fill="#959b73"/><rect x="840.0" y="337.5" width="58.7" height="58.8" fill="#9b9b77"/><rect x="897.7" y="337.5" width="58.7" height="58.8" fill="#9f9b77"/><rect x="955.3" y="337.5" width="58.7" height="58.8" fill="#9b9977"/><rect x="1013.0" y="337.5" width="58.7" height="58.8" fill="#9b9977"/><rect x="609.3" y="395.2" width="58.7" height="58.8" fill="#868a6b"/><rect x="667.0" y="395.2" width="58.7" height="58.8" fill="#868a6b"/><rect x="724.7" y="395.2" width="58.7" height="58.8" fill="#888e6b"/><rect x="782.3" y="395.2" width="58.7" height="58.8" fill="#90906f"/><rect x="840.0" y="395.2" width="58.7" height="58.8" fill="#9b9275"/><rect x="897.7" y="395.2" width="58.7" height="58.8" fill="#9d9277"/><rect x="955.3" y="395.2" width="58.7" height="58.8" fill="#958c71"/><rect x="1013.0" y="395.2" width="58.7" height="58.8" fill="#958c71"/><rect x="609.3" y="453.0" width="58.7" height="58.8" fill="#868a6b"/><rect x="667.0" y="453.0" width="58.7" height="58.8" fill="#868a6b"/><rect x="724.7" y="453.0" width="58.7" height="58.8" fill="#888e6b"/><rect x="782.3" y="453.0" width="58.7" height="58.8" fill="#90906f"/><rect x="840.0" y="453.0" width="58.7" height="58.8" fill="#9b9275"/><rect x="897.7" y="453.0" width="58.7" height="58.8" fill="#9d9277"/><rect x="955.3" y="453.0" width="58.7" height="58.8" fill="#958c71"/><rect x="1013.0" y="453.0" width="58.7" height="58.8" fill="#958c71"/></g>
  <ellipse cx="880" cy="234" rx="130" ry="10" fill="#86846c" opacity=".35" filter="url(#bl3)"/>
  <ellipse cx="685" cy="236" rx="30" ry="22" fill="#3e4a34" opacity=".25" filter="url(#bl3)"/>
  <rect x="667" y="447" width="346" height="6" fill="#5e6450" opacity=".2" filter="url(#bl3)"/>
  <rect x="667" y="222" width="346" height="231" fill="url(#vigl)"/>
  <rect x="667" y="222" width="346" height="1" fill="#5a5e52"/>
  <g fill="none"><path d="M779.0 258.5L775.5 255.0" stroke="#62744a" stroke-width="1.1" opacity="0.19"/><path d="M741.3 243.7L739.4 239.2" stroke="#5a6a44" stroke-width="0.7" opacity="0.23"/><path d="M744.2 367.7L745.2 359.1" stroke="#b0a88c" stroke-width="1.0" opacity="0.26"/><path d="M767.2 257.0L766.2 253.7" stroke="#5a6a44" stroke-width="0.9" opacity="0.13"/><path d="M732.0 246.3L732.7 239.1" stroke="#62744a" stroke-width="0.8" opacity="0.20"/><path d="M775.7 358.1L774.1 353.0" stroke="#6a6450" stroke-width="0.6" opacity="0.21"/><path d="M770.9 337.4L770.5 332.4" stroke="#5e6a48" stroke-width="0.8" opacity="0.13"/><path d="M929.0 258.8L925.8 256.1" stroke="#62744a" stroke-width="0.8" opacity="0.16"/><path d="M838.8 406.5L837.2 404.6" stroke="#a8a488" stroke-width="1.0" opacity="0.27"/><path d="M890.9 451.4L888.6 444.5" stroke="#9f9a7c" stroke-width="0.8" opacity="0.26"/><path d="M725.1 250.8L726.4 248.1" stroke="#98a878" stroke-width="1.1" opacity="0.35"/><path d="M838.8 262.1L837.1 257.4" stroke="#a0ac80" stroke-width="0.7" opacity="0.47"/><path d="M810.7 306.2L815.1 302.4" stroke="#b0a88c" stroke-width="0.9" opacity="0.29"/><path d="M671.2 414.3L669.9 410.8" stroke="#9f9a7c" stroke-width="0.8" opacity="0.40"/><path d="M710.4 420.8L712.3 412.7" stroke="#66704c" stroke-width="1.0" opacity="0.23"/><path d="M969.6 406.7L968.8 401.5" stroke="#aeb090" stroke-width="0.6" opacity="0.27"/><path d="M739.2 261.2L736.6 258.8" stroke="#98a878" stroke-width="1.1" opacity="0.38"/><path d="M879.4 240.1L878.6 236.0" stroke="#62744a" stroke-width="0.8" opacity="0.19"/><path d="M706.9 335.8L706.7 326.9" stroke="#b0a88c" stroke-width="0.8" opacity="0.28"/><path d="M758.6 413.8L756.4 412.2" stroke="#6a6450" stroke-width="0.9" opacity="0.16"/><path d="M983.3 397.6L984.3 393.1" stroke="#9f9a7c" stroke-width="1.1" opacity="0.38"/><path d="M790.1 275.0L790.1 268.8" stroke="#5a6a44" stroke-width="1.0" opacity="0.22"/><path d="M846.1 305.4L844.4 304.1" stroke="#9f9a7c" stroke-width="0.9" opacity="0.30"/><path d="M786.1 409.2L784.6 402.3" stroke="#5e6a48" stroke-width="0.7" opacity="0.14"/><path d="M735.1 270.8L738.4 266.9" stroke="#62744a" stroke-width="0.8" opacity="0.24"/><path d="M889.5 415.1L888.9 411.5" stroke="#5e6a48" stroke-width="0.7" opacity="0.18"/><path d="M944.1 446.5L943.3 441.3" stroke="#6a6450" stroke-width="1.1" opacity="0.13"/><path d="M676.5 359.3L677.8 353.9" stroke="#6a6450" stroke-width="0.9" opacity="0.25"/><path d="M788.2 349.6L786.2 348.2" stroke="#6a6450" stroke-width="1.0" opacity="0.13"/><path d="M715.2 449.9L717.1 447.3" stroke="#b0a88c" stroke-width="0.7" opacity="0.32"/><path d="M812.0 254.0L810.2 246.1" stroke="#8fa070" stroke-width="0.9" opacity="0.45"/><path d="M953.2 425.1L951.5 422.6" stroke="#66704c" stroke-width="0.9" opacity="0.21"/><path d="M935.5 258.3L936.2 254.6" stroke="#98a878" stroke-width="0.9" opacity="0.33"/><path d="M859.2 403.6L859.5 400.0" stroke="#9f9a7c" stroke-width="0.6" opacity="0.26"/><path d="M823.5 230.4L819.1 226.2" stroke="#8fa070" stroke-width="0.7" opacity="0.40"/><path d="M762.9 340.4L763.0 332.5" stroke="#9f9a7c" stroke-width="1.0" opacity="0.48"/><path d="M737.1 326.5L736.3 321.2" stroke="#b0a88c" stroke-width="0.7" opacity="0.36"/><path d="M771.8 252.0L775.8 248.2" stroke="#62744a" stroke-width="1.0" opacity="0.13"/><path d="M1001.8 274.3L1000.5 265.8" stroke="#8fa070" stroke-width="0.7" opacity="0.46"/><path d="M784.3 268.8L785.8 264.6" stroke="#8fa070" stroke-width="1.0" opacity="0.36"/><path d="M769.2 444.0L771.1 442.0" stroke="#a8a488" stroke-width="0.7" opacity="0.27"/><path d="M980.4 265.6L983.6 260.2" stroke="#62744a" stroke-width="0.9" opacity="0.17"/><path d="M780.2 287.9L776.9 282.3" stroke="#62744a" stroke-width="0.9" opacity="0.24"/><path d="M944.4 243.2L940.2 239.1" stroke="#62744a" stroke-width="1.1" opacity="0.11"/><path d="M811.5 433.6L808.0 430.6" stroke="#5e6a48" stroke-width="0.7" opacity="0.24"/><path d="M729.7 437.5L730.0 430.7" stroke="#aeb090" stroke-width="0.7" opacity="0.38"/><path d="M787.1 228.2L784.6 226.4" stroke="#5a6a44" stroke-width="0.7" opacity="0.18"/><path d="M855.9 427.5L853.5 419.6" stroke="#b0a88c" stroke-width="1.0" opacity="0.34"/><path d="M807.0 303.6L805.5 301.5" stroke="#9f9a7c" stroke-width="0.6" opacity="0.36"/><path d="M842.1 446.3L843.8 440.4" stroke="#b0a88c" stroke-width="0.8" opacity="0.29"/><path d="M758.1 444.2L758.7 435.5" stroke="#9f9a7c" stroke-width="0.7" opacity="0.30"/><path d="M783.0 243.2L784.1 238.9" stroke="#98a878" stroke-width="1.0" opacity="0.27"/><path d="M716.8 358.4L715.3 353.6" stroke="#5e6a48" stroke-width="0.9" opacity="0.19"/><path d="M914.7 425.3L913.4 420.4" stroke="#5e6a48" stroke-width="0.9" opacity="0.15"/><path d="M717.1 412.9L717.2 405.6" stroke="#b0a88c" stroke-width="1.0" opacity="0.48"/><path d="M863.7 410.2L864.5 407.4" stroke="#6a6450" stroke-width="0.9" opacity="0.20"/><path d="M746.6 231.1L745.8 227.5" stroke="#a0ac80" stroke-width="0.9" opacity="0.39"/><path d="M836.3 224.8L838.9 218.3" stroke="#5a6a44" stroke-width="0.6" opacity="0.20"/><path d="M692.8 284.8L689.9 279.2" stroke="#62744a" stroke-width="0.8" opacity="0.18"/><path d="M832.7 380.6L834.0 373.3" stroke="#5e6a48" stroke-width="0.8" opacity="0.19"/><path d="M881.9 254.6L881.8 248.7" stroke="#5a6a44" stroke-width="0.9" opacity="0.20"/><path d="M767.6 342.3L767.4 336.5" stroke="#b0a88c" stroke-width="0.6" opacity="0.33"/><path d="M830.6 290.3L830.7 286.9" stroke="#62744a" stroke-width="1.1" opacity="0.17"/><path d="M989.0 241.1L990.2 238.2" stroke="#a0ac80" stroke-width="1.0" opacity="0.28"/><path d="M843.0 427.1L840.4 421.3" stroke="#66704c" stroke-width="0.7" opacity="0.17"/><path d="M995.7 380.1L997.4 375.4" stroke="#aeb090" stroke-width="1.0" opacity="0.33"/><path d="M667.6 395.9L663.8 391.0" stroke="#6a6450" stroke-width="1.0" opacity="0.11"/><path d="M754.6 238.9L757.1 235.5" stroke="#a0ac80" stroke-width="1.0" opacity="0.44"/><path d="M764.1 235.8L765.4 229.2" stroke="#a0ac80" stroke-width="0.8" opacity="0.36"/><path d="M934.5 403.8L931.5 401.4" stroke="#66704c" stroke-width="1.1" opacity="0.24"/><path d="M684.1 391.7L686.1 387.0" stroke="#66704c" stroke-width="1.1" opacity="0.18"/><path d="M857.3 263.1L855.7 258.4" stroke="#8fa070" stroke-width="0.7" opacity="0.49"/><path d="M724.9 261.0L727.0 258.6" stroke="#98a878" stroke-width="0.8" opacity="0.36"/><path d="M727.4 351.3L726.5 346.6" stroke="#5e6a48" stroke-width="1.0" opacity="0.23"/><path d="M809.8 318.8L808.7 312.9" stroke="#a8a488" stroke-width="0.9" opacity="0.37"/><path d="M791.6 381.3L794.0 376.5" stroke="#5e6a48" stroke-width="0.7" opacity="0.15"/><path d="M805.3 326.1L809.2 320.3" stroke="#5e6a48" stroke-width="0.8" opacity="0.13"/><path d="M931.2 408.2L931.1 399.4" stroke="#aeb090" stroke-width="0.7" opacity="0.49"/><path d="M704.7 259.4L706.3 253.8" stroke="#62744a" stroke-width="1.0" opacity="0.12"/><path d="M667.5 252.8L664.0 249.9" stroke="#5a6a44" stroke-width="0.9" opacity="0.20"/><path d="M818.4 398.9L817.4 395.7" stroke="#5e6a48" stroke-width="0.7" opacity="0.17"/><path d="M875.0 226.4L874.7 221.6" stroke="#5a6a44" stroke-width="0.7" opacity="0.18"/><path d="M752.5 444.0L750.5 437.5" stroke="#aeb090" stroke-width="0.9" opacity="0.47"/><path d="M695.1 276.2L694.0 270.9" stroke="#8fa070" stroke-width="0.8" opacity="0.33"/><path d="M903.2 269.4L905.7 262.8" stroke="#5a6a44" stroke-width="0.7" opacity="0.18"/><path d="M932.0 268.4L930.1 263.5" stroke="#5a6a44" stroke-width="0.8" opacity="0.24"/><path d="M731.8 275.1L733.1 270.1" stroke="#5a6a44" stroke-width="0.6" opacity="0.24"/><path d="M675.2 360.5L676.8 355.7" stroke="#aeb090" stroke-width="1.0" opacity="0.47"/><path d="M920.5 452.4L918.5 444.6" stroke="#aeb090" stroke-width="0.9" opacity="0.26"/><path d="M798.0 309.6L795.9 306.1" stroke="#9f9a7c" stroke-width="0.8" opacity="0.27"/><path d="M973.3 352.5L972.0 345.3" stroke="#66704c" stroke-width="0.8" opacity="0.23"/><path d="M684.0 332.4L686.7 329.6" stroke="#9f9a7c" stroke-width="0.8" opacity="0.43"/><path d="M945.0 238.2L942.8 236.1" stroke="#62744a" stroke-width="1.1" opacity="0.15"/><path d="M762.4 224.9L766.2 220.8" stroke="#5a6a44" stroke-width="0.7" opacity="0.12"/><path d="M831.4 443.1L830.0 434.7" stroke="#aeb090" stroke-width="0.7" opacity="0.45"/><path d="M838.8 226.0L836.5 218.3" stroke="#5a6a44" stroke-width="0.8" opacity="0.19"/><path d="M777.6 306.9L773.7 302.8" stroke="#b0a88c" stroke-width="0.6" opacity="0.31"/><path d="M678.7 350.5L681.4 348.5" stroke="#5e6a48" stroke-width="0.6" opacity="0.15"/><path d="M700.4 338.2L699.8 331.0" stroke="#aeb090" stroke-width="1.0" opacity="0.37"/><path d="M748.3 347.3L751.0 341.1" stroke="#66704c" stroke-width="0.9" opacity="0.15"/><path d="M796.0 393.0L794.6 389.6" stroke="#b0a88c" stroke-width="1.1" opacity="0.32"/><path d="M732.1 238.8L730.6 235.1" stroke="#5a6a44" stroke-width="1.1" opacity="0.20"/><path d="M702.4 332.7L705.9 327.3" stroke="#5e6a48" stroke-width="0.7" opacity="0.23"/><path d="M684.4 361.5L681.2 355.6" stroke="#b0a88c" stroke-width="0.7" opacity="0.36"/><path d="M936.1 440.6L936.6 437.0" stroke="#5e6a48" stroke-width="0.8" opacity="0.12"/><path d="M682.3 453.0L683.3 450.2" stroke="#5e6a48" stroke-width="0.8" opacity="0.22"/><path d="M694.0 231.2L693.8 225.2" stroke="#a0ac80" stroke-width="0.7" opacity="0.42"/><path d="M804.6 286.1L806.7 277.9" stroke="#98a878" stroke-width="0.9" opacity="0.33"/><path d="M790.6 319.4L795.1 316.3" stroke="#b0a88c" stroke-width="0.8" opacity="0.35"/><path d="M992.9 323.4L991.0 321.1" stroke="#9f9a7c" stroke-width="0.7" opacity="0.37"/><path d="M672.1 350.3L675.6 346.5" stroke="#9f9a7c" stroke-width="0.7" opacity="0.43"/><path d="M787.4 261.1L785.3 259.0" stroke="#98a878" stroke-width="1.0" opacity="0.33"/><path d="M682.1 433.0L682.8 428.3" stroke="#5e6a48" stroke-width="0.9" opacity="0.24"/><path d="M952.3 260.7L949.4 254.6" stroke="#98a878" stroke-width="0.7" opacity="0.46"/><path d="M742.5 315.5L741.5 309.7" stroke="#b0a88c" stroke-width="1.0" opacity="0.49"/><path d="M733.6 426.4L735.6 419.0" stroke="#66704c" stroke-width="0.9" opacity="0.13"/><path d="M773.0 320.2L772.3 313.8" stroke="#66704c" stroke-width="0.7" opacity="0.18"/><path d="M668.2 449.8L667.8 444.1" stroke="#66704c" stroke-width="1.0" opacity="0.23"/><path d="M805.5 239.4L804.5 234.5" stroke="#5a6a44" stroke-width="0.7" opacity="0.12"/><path d="M986.1 295.8L982.3 291.9" stroke="#62744a" stroke-width="1.0" opacity="0.20"/><path d="M675.9 239.2L677.7 233.2" stroke="#98a878" stroke-width="0.8" opacity="0.50"/><path d="M998.0 433.8L999.5 430.7" stroke="#5e6a48" stroke-width="0.9" opacity="0.23"/><path d="M754.3 298.2L757.6 294.4" stroke="#a0ac80" stroke-width="1.1" opacity="0.38"/><path d="M739.1 284.2L737.6 278.7" stroke="#98a878" stroke-width="0.9" opacity="0.35"/><path d="M763.3 299.1L765.3 295.1" stroke="#8fa070" stroke-width="1.0" opacity="0.26"/><path d="M1001.3 327.7L1002.9 322.2" stroke="#66704c" stroke-width="0.9" opacity="0.25"/><path d="M803.4 406.7L806.0 404.9" stroke="#66704c" stroke-width="0.6" opacity="0.15"/><path d="M746.6 364.9L744.1 357.2" stroke="#66704c" stroke-width="1.1" opacity="0.20"/><path d="M775.2 224.4L773.7 222.3" stroke="#62744a" stroke-width="0.8" opacity="0.17"/><path d="M683.5 335.8L680.0 332.8" stroke="#9f9a7c" stroke-width="0.9" opacity="0.33"/><path d="M851.8 318.6L849.6 315.6" stroke="#aeb090" stroke-width="0.6" opacity="0.29"/><path d="M823.0 238.6L823.9 235.0" stroke="#a0ac80" stroke-width="0.6" opacity="0.49"/><path d="M951.0 428.4L951.8 422.0" stroke="#6a6450" stroke-width="0.7" opacity="0.21"/><path d="M979.6 234.1L978.8 228.0" stroke="#98a878" stroke-width="0.7" opacity="0.48"/><path d="M735.3 318.6L736.5 312.9" stroke="#66704c" stroke-width="0.7" opacity="0.22"/><path d="M774.0 292.8L775.6 290.8" stroke="#5a6a44" stroke-width="0.8" opacity="0.16"/><path d="M982.6 242.4L979.7 237.5" stroke="#62744a" stroke-width="0.6" opacity="0.14"/><path d="M783.1 395.7L786.3 390.8" stroke="#66704c" stroke-width="0.9" opacity="0.20"/><path d="M904.3 434.1L901.8 426.3" stroke="#5e6a48" stroke-width="0.9" opacity="0.12"/><path d="M725.7 431.2L722.6 425.1" stroke="#9f9a7c" stroke-width="0.8" opacity="0.30"/><path d="M961.8 435.1L965.7 429.0" stroke="#66704c" stroke-width="0.9" opacity="0.23"/><path d="M963.7 324.1L964.4 316.9" stroke="#b0a88c" stroke-width="0.9" opacity="0.35"/><path d="M862.6 263.3L861.0 261.4" stroke="#5a6a44" stroke-width="0.7" opacity="0.16"/><path d="M676.9 233.5L678.3 226.7" stroke="#5a6a44" stroke-width="0.9" opacity="0.12"/><path d="M792.7 411.2L796.6 406.5" stroke="#aeb090" stroke-width="0.7" opacity="0.28"/><path d="M705.7 231.9L709.0 226.0" stroke="#62744a" stroke-width="0.7" opacity="0.18"/><path d="M768.9 301.1L767.9 296.8" stroke="#5a6a44" stroke-width="0.8" opacity="0.21"/><path d="M778.0 444.8L780.7 440.8" stroke="#5e6a48" stroke-width="0.6" opacity="0.22"/><path d="M846.4 246.5L843.4 243.8" stroke="#5a6a44" stroke-width="0.7" opacity="0.19"/><path d="M766.8 395.9L766.1 392.8" stroke="#b0a88c" stroke-width="0.9" opacity="0.49"/><path d="M998.2 342.0L995.4 337.5" stroke="#6a6450" stroke-width="0.7" opacity="0.14"/><path d="M991.8 399.6L995.1 397.3" stroke="#5e6a48" stroke-width="0.8" opacity="0.20"/><path d="M805.8 314.4L801.6 309.8" stroke="#5e6a48" stroke-width="0.8" opacity="0.16"/><path d="M726.2 449.0L729.8 445.7" stroke="#a8a488" stroke-width="0.8" opacity="0.34"/><path d="M720.7 417.1L723.0 411.2" stroke="#aeb090" stroke-width="0.7" opacity="0.42"/><path d="M746.9 300.5L748.8 294.4" stroke="#62744a" stroke-width="1.0" opacity="0.15"/><path d="M958.9 259.4L957.6 256.2" stroke="#8fa070" stroke-width="0.7" opacity="0.34"/><path d="M997.7 283.2L1002.6 280.0" stroke="#8fa070" stroke-width="0.8" opacity="0.28"/><path d="M1007.4 406.0L1006.7 398.7" stroke="#a8a488" stroke-width="1.0" opacity="0.32"/><path d="M827.5 226.9L826.8 218.9" stroke="#8fa070" stroke-width="0.6" opacity="0.32"/><path d="M756.0 393.1L754.9 390.6" stroke="#6a6450" stroke-width="1.0" opacity="0.19"/><path d="M812.7 276.3L816.2 271.9" stroke="#5a6a44" stroke-width="0.9" opacity="0.20"/><path d="M824.1 295.7L820.7 291.8" stroke="#a0ac80" stroke-width="0.9" opacity="0.43"/><path d="M753.5 321.0L754.5 315.5" stroke="#b0a88c" stroke-width="0.8" opacity="0.47"/><path d="M670.7 414.5L666.6 409.5" stroke="#b0a88c" stroke-width="1.0" opacity="0.29"/><path d="M992.4 342.9L992.8 339.4" stroke="#6a6450" stroke-width="0.6" opacity="0.18"/><path d="M785.6 393.9L788.8 391.7" stroke="#a8a488" stroke-width="0.9" opacity="0.43"/><path d="M799.1 238.1L800.9 236.2" stroke="#62744a" stroke-width="0.7" opacity="0.19"/><path d="M772.0 315.7L776.7 312.0" stroke="#66704c" stroke-width="0.7" opacity="0.18"/><path d="M988.6 239.8L985.4 234.0" stroke="#5a6a44" stroke-width="0.7" opacity="0.22"/><path d="M897.4 414.2L896.5 406.6" stroke="#6a6450" stroke-width="1.0" opacity="0.20"/><path d="M829.4 403.4L830.7 399.6" stroke="#66704c" stroke-width="0.8" opacity="0.20"/><path d="M945.7 407.0L946.8 402.2" stroke="#aeb090" stroke-width="0.9" opacity="0.36"/><path d="M988.3 419.7L989.8 417.3" stroke="#5e6a48" stroke-width="0.8" opacity="0.18"/><path d="M739.6 240.5L740.3 235.9" stroke="#5a6a44" stroke-width="0.8" opacity="0.14"/><path d="M938.6 271.8L938.8 266.4" stroke="#5a6a44" stroke-width="1.0" opacity="0.20"/><path d="M939.7 416.1L940.8 412.3" stroke="#6a6450" stroke-width="0.9" opacity="0.23"/><path d="M707.5 251.1L709.8 247.2" stroke="#8fa070" stroke-width="0.8" opacity="0.26"/><path d="M717.0 336.5L717.3 330.6" stroke="#5e6a48" stroke-width="0.8" opacity="0.13"/><path d="M769.7 330.7L772.8 328.6" stroke="#5e6a48" stroke-width="0.9" opacity="0.20"/><path d="M676.9 363.6L680.5 360.0" stroke="#a8a488" stroke-width="0.8" opacity="0.38"/><path d="M977.6 231.8L978.9 224.8" stroke="#8fa070" stroke-width="0.8" opacity="0.34"/><path d="M848.8 400.5L848.4 396.2" stroke="#a8a488" stroke-width="0.7" opacity="0.46"/><path d="M841.3 286.2L844.6 283.7" stroke="#5a6a44" stroke-width="0.8" opacity="0.15"/><path d="M770.5 358.3L773.1 353.0" stroke="#aeb090" stroke-width="0.6" opacity="0.39"/><path d="M770.9 225.4L773.0 223.2" stroke="#5a6a44" stroke-width="1.1" opacity="0.22"/><path d="M740.5 376.7L742.6 372.1" stroke="#b0a88c" stroke-width="0.8" opacity="0.47"/><path d="M701.8 437.1L703.2 435.2" stroke="#9f9a7c" stroke-width="0.7" opacity="0.39"/><path d="M771.5 320.6L771.0 315.7" stroke="#5e6a48" stroke-width="0.9" opacity="0.18"/><path d="M952.4 401.2L953.9 396.3" stroke="#a8a488" stroke-width="0.8" opacity="0.25"/><path d="M871.8 438.7L871.5 429.9" stroke="#a8a488" stroke-width="0.8" opacity="0.27"/><path d="M976.9 367.6L973.9 365.4" stroke="#5e6a48" stroke-width="0.7" opacity="0.14"/><path d="M830.4 287.1L830.0 280.7" stroke="#5a6a44" stroke-width="1.0" opacity="0.16"/><path d="M907.4 257.2L905.3 250.5" stroke="#62744a" stroke-width="1.1" opacity="0.18"/><path d="M754.9 444.8L750.9 442.0" stroke="#a8a488" stroke-width="0.8" opacity="0.35"/><path d="M874.6 443.3L875.9 435.6" stroke="#aeb090" stroke-width="0.7" opacity="0.37"/><path d="M1001.4 250.7L997.6 244.7" stroke="#62744a" stroke-width="1.0" opacity="0.17"/><path d="M993.9 403.7L992.1 398.1" stroke="#9f9a7c" stroke-width="1.0" opacity="0.47"/><path d="M672.4 258.6L673.3 250.8" stroke="#5a6a44" stroke-width="0.9" opacity="0.16"/><path d="M875.2 429.2L872.9 422.4" stroke="#9f9a7c" stroke-width="0.7" opacity="0.32"/><path d="M985.5 398.8L983.3 392.1" stroke="#b0a88c" stroke-width="1.0" opacity="0.32"/><path d="M983.2 303.4L983.4 299.9" stroke="#5e6a48" stroke-width="1.0" opacity="0.22"/><path d="M1006.9 294.9L1006.4 291.6" stroke="#62744a" stroke-width="0.6" opacity="0.19"/><path d="M852.5 305.3L852.0 302.0" stroke="#66704c" stroke-width="0.9" opacity="0.23"/><path d="M732.4 268.0L733.6 264.4" stroke="#8fa070" stroke-width="1.0" opacity="0.34"/><path d="M963.5 280.4L963.4 271.9" stroke="#62744a" stroke-width="1.0" opacity="0.20"/><path d="M721.0 360.8L721.2 355.7" stroke="#a8a488" stroke-width="1.0" opacity="0.30"/><path d="M740.9 435.9L738.6 433.3" stroke="#b0a88c" stroke-width="0.6" opacity="0.31"/><path d="M736.5 265.4L734.7 263.7" stroke="#62744a" stroke-width="1.0" opacity="0.18"/><path d="M976.6 421.6L980.1 418.0" stroke="#5e6a48" stroke-width="0.9" opacity="0.14"/><path d="M888.7 443.0L887.6 436.2" stroke="#b0a88c" stroke-width="0.7" opacity="0.34"/><path d="M916.4 263.4L920.9 259.2" stroke="#8fa070" stroke-width="1.0" opacity="0.48"/><path d="M683.3 404.1L684.8 397.3" stroke="#5e6a48" stroke-width="0.8" opacity="0.13"/><path d="M669.0 269.6L670.0 262.2" stroke="#8fa070" stroke-width="0.8" opacity="0.28"/><path d="M755.9 252.4L753.4 248.3" stroke="#98a878" stroke-width="1.0" opacity="0.48"/><path d="M828.9 433.0L825.5 427.7" stroke="#5e6a48" stroke-width="1.0" opacity="0.24"/><path d="M974.5 256.0L971.7 252.8" stroke="#5a6a44" stroke-width="0.8" opacity="0.20"/><path d="M784.6 412.5L785.6 406.9" stroke="#b0a88c" stroke-width="0.7" opacity="0.43"/><path d="M823.2 427.7L820.7 423.9" stroke="#b0a88c" stroke-width="0.7" opacity="0.29"/><path d="M957.5 300.6L957.4 296.6" stroke="#a0ac80" stroke-width="1.1" opacity="0.28"/><path d="M686.7 429.0L684.0 423.6" stroke="#9f9a7c" stroke-width="1.0" opacity="0.28"/><path d="M1002.9 322.9L1001.3 319.2" stroke="#aeb090" stroke-width="1.0" opacity="0.32"/><path d="M686.9 390.4L689.5 388.4" stroke="#9f9a7c" stroke-width="0.8" opacity="0.38"/><path d="M940.2 440.1L939.3 435.6" stroke="#aeb090" stroke-width="0.9" opacity="0.30"/><path d="M714.8 265.2L717.0 258.6" stroke="#98a878" stroke-width="1.0" opacity="0.46"/><path d="M727.7 255.4L728.9 248.7" stroke="#a0ac80" stroke-width="0.6" opacity="0.30"/><path d="M916.7 236.7L914.9 229.4" stroke="#62744a" stroke-width="0.8" opacity="0.12"/><path d="M931.0 254.5L928.6 248.8" stroke="#62744a" stroke-width="1.0" opacity="0.12"/><path d="M865.9 420.5L868.6 417.9" stroke="#5e6a48" stroke-width="1.0" opacity="0.13"/><path d="M949.5 422.2L951.0 417.9" stroke="#a8a488" stroke-width="0.7" opacity="0.32"/><path d="M675.9 408.2L674.6 405.1" stroke="#b0a88c" stroke-width="0.8" opacity="0.29"/><path d="M859.2 442.8L860.8 441.2" stroke="#66704c" stroke-width="0.9" opacity="0.11"/><path d="M910.1 247.6L912.6 240.4" stroke="#98a878" stroke-width="0.9" opacity="0.37"/><path d="M930.5 249.2L932.3 246.9" stroke="#5a6a44" stroke-width="0.7" opacity="0.23"/><path d="M723.9 413.2L722.5 404.8" stroke="#a8a488" stroke-width="1.1" opacity="0.35"/><path d="M750.2 300.7L753.3 298.5" stroke="#62744a" stroke-width="1.0" opacity="0.22"/><path d="M685.5 342.5L690.1 338.1" stroke="#aeb090" stroke-width="0.6" opacity="0.42"/><path d="M704.7 266.9L702.8 263.2" stroke="#5a6a44" stroke-width="1.1" opacity="0.13"/><path d="M935.7 438.6L938.5 433.5" stroke="#5e6a48" stroke-width="0.9" opacity="0.12"/><path d="M759.0 379.4L759.2 374.7" stroke="#6a6450" stroke-width="0.7" opacity="0.13"/><path d="M671.7 278.2L670.2 276.3" stroke="#98a878" stroke-width="0.9" opacity="0.28"/><path d="M997.8 341.7L997.6 337.1" stroke="#5e6a48" stroke-width="0.9" opacity="0.17"/><path d="M973.3 433.7L971.3 428.1" stroke="#6a6450" stroke-width="1.0" opacity="0.19"/><path d="M892.0 270.1L891.6 262.8" stroke="#62744a" stroke-width="0.8" opacity="0.18"/><path d="M750.8 274.7L749.8 268.9" stroke="#5a6a44" stroke-width="0.7" opacity="0.24"/><path d="M996.4 298.2L994.9 294.0" stroke="#5a6a44" stroke-width="1.0" opacity="0.15"/><path d="M721.9 239.3L721.2 231.2" stroke="#a0ac80" stroke-width="0.8" opacity="0.46"/><path d="M1009.3 379.2L1008.3 370.8" stroke="#5e6a48" stroke-width="0.9" opacity="0.20"/><path d="M961.1 412.1L963.1 406.9" stroke="#66704c" stroke-width="0.9" opacity="0.15"/><path d="M809.9 247.7L810.3 242.2" stroke="#a0ac80" stroke-width="0.9" opacity="0.49"/><path d="M811.6 403.5L812.9 395.5" stroke="#aeb090" stroke-width="0.7" opacity="0.42"/><path d="M789.0 304.8L789.8 298.8" stroke="#5e6a48" stroke-width="1.0" opacity="0.22"/><path d="M839.8 325.7L838.7 322.0" stroke="#aeb090" stroke-width="0.6" opacity="0.40"/><path d="M985.4 298.2L988.9 292.6" stroke="#5a6a44" stroke-width="1.0" opacity="0.24"/><path d="M997.7 229.9L1000.0 227.2" stroke="#8fa070" stroke-width="0.9" opacity="0.44"/><path d="M1012.4 342.5L1014.0 337.0" stroke="#9f9a7c" stroke-width="0.9" opacity="0.26"/><path d="M823.8 226.4L822.5 223.7" stroke="#8fa070" stroke-width="0.9" opacity="0.35"/><path d="M865.6 425.5L865.5 416.7" stroke="#9f9a7c" stroke-width="1.0" opacity="0.42"/><path d="M698.9 307.1L696.3 304.3" stroke="#b0a88c" stroke-width="1.0" opacity="0.28"/><path d="M905.7 411.9L910.0 406.6" stroke="#b0a88c" stroke-width="1.0" opacity="0.38"/><path d="M738.9 428.5L736.0 425.8" stroke="#5e6a48" stroke-width="1.1" opacity="0.16"/><path d="M887.2 233.7L889.3 229.5" stroke="#8fa070" stroke-width="1.1" opacity="0.39"/><path d="M804.6 246.6L802.9 245.2" stroke="#8fa070" stroke-width="1.0" opacity="0.39"/><path d="M976.9 341.8L975.3 338.9" stroke="#5e6a48" stroke-width="1.0" opacity="0.13"/><path d="M703.9 246.9L704.0 242.9" stroke="#62744a" stroke-width="0.6" opacity="0.22"/><path d="M671.3 400.5L672.8 396.2" stroke="#b0a88c" stroke-width="0.9" opacity="0.26"/><path d="M964.3 441.0L963.0 438.5" stroke="#5e6a48" stroke-width="1.0" opacity="0.12"/><path d="M868.6 443.8L869.6 438.3" stroke="#a8a488" stroke-width="0.9" opacity="0.29"/><path d="M727.0 225.4L726.5 217.3" stroke="#a0ac80" stroke-width="0.8" opacity="0.49"/><path d="M995.6 279.6L997.2 275.0" stroke="#a0ac80" stroke-width="1.0" opacity="0.35"/><path d="M674.8 422.8L673.3 420.3" stroke="#a8a488" stroke-width="0.7" opacity="0.49"/><path d="M861.3 250.3L860.3 244.3" stroke="#98a878" stroke-width="0.8" opacity="0.49"/><path d="M982.9 350.8L982.6 345.5" stroke="#aeb090" stroke-width="0.9" opacity="0.26"/><path d="M785.1 259.7L781.5 255.7" stroke="#98a878" stroke-width="0.8" opacity="0.39"/><path d="M794.3 273.6L795.3 268.4" stroke="#62744a" stroke-width="0.9" opacity="0.24"/><path d="M745.6 327.7L746.7 324.3" stroke="#aeb090" stroke-width="0.8" opacity="0.40"/><path d="M752.2 363.3L754.2 360.6" stroke="#a8a488" stroke-width="0.7" opacity="0.39"/><path d="M774.5 313.3L773.1 310.8" stroke="#66704c" stroke-width="1.0" opacity="0.14"/><path d="M690.6 433.3L693.3 426.9" stroke="#9f9a7c" stroke-width="0.7" opacity="0.27"/><path d="M790.1 417.4L791.2 411.8" stroke="#5e6a48" stroke-width="0.7" opacity="0.24"/><path d="M793.8 407.1L797.3 402.9" stroke="#aeb090" stroke-width="1.0" opacity="0.31"/><path d="M788.8 368.0L786.9 365.5" stroke="#6a6450" stroke-width="0.9" opacity="0.14"/><path d="M816.0 397.3L817.3 394.0" stroke="#6a6450" stroke-width="0.7" opacity="0.20"/><path d="M957.5 354.6L955.0 348.5" stroke="#9f9a7c" stroke-width="0.7" opacity="0.48"/><path d="M978.8 424.4L980.5 418.6" stroke="#6a6450" stroke-width="1.0" opacity="0.13"/><path d="M739.7 433.4L735.9 429.3" stroke="#66704c" stroke-width="0.9" opacity="0.25"/><path d="M743.4 344.8L746.1 342.4" stroke="#9f9a7c" stroke-width="1.0" opacity="0.42"/><path d="M823.7 236.4L822.9 229.4" stroke="#5a6a44" stroke-width="0.7" opacity="0.18"/><path d="M996.5 413.0L993.8 408.5" stroke="#b0a88c" stroke-width="0.7" opacity="0.39"/><path d="M687.5 305.9L685.4 301.8" stroke="#b0a88c" stroke-width="0.8" opacity="0.42"/><path d="M834.0 385.6L834.8 382.9" stroke="#9f9a7c" stroke-width="0.7" opacity="0.42"/><path d="M750.3 368.1L749.9 364.5" stroke="#6a6450" stroke-width="0.9" opacity="0.20"/><path d="M826.6 399.5L822.7 394.6" stroke="#9f9a7c" stroke-width="0.6" opacity="0.37"/><path d="M977.0 293.6L976.0 290.3" stroke="#5a6a44" stroke-width="0.8" opacity="0.15"/><path d="M792.6 262.5L790.7 261.2" stroke="#62744a" stroke-width="1.0" opacity="0.12"/><path d="M1006.2 353.1L1006.1 349.4" stroke="#b0a88c" stroke-width="0.8" opacity="0.45"/><path d="M791.3 244.8L792.1 240.3" stroke="#62744a" stroke-width="0.6" opacity="0.20"/><path d="M925.6 229.8L923.2 226.3" stroke="#8fa070" stroke-width="1.0" opacity="0.38"/><path d="M903.0 247.4L901.1 240.8" stroke="#62744a" stroke-width="1.0" opacity="0.14"/><path d="M777.8 308.4L776.6 302.4" stroke="#5e6a48" stroke-width="0.7" opacity="0.12"/><path d="M944.8 434.9L943.5 426.2" stroke="#b0a88c" stroke-width="0.8" opacity="0.37"/><path d="M721.5 292.6L718.2 289.1" stroke="#5a6a44" stroke-width="0.9" opacity="0.13"/><path d="M805.9 448.2L805.6 440.1" stroke="#9f9a7c" stroke-width="1.0" opacity="0.25"/><path d="M962.9 404.2L961.3 399.4" stroke="#6a6450" stroke-width="1.0" opacity="0.21"/><path d="M688.7 226.0L685.0 219.8" stroke="#62744a" stroke-width="0.8" opacity="0.15"/><path d="M734.6 243.5L734.3 238.6" stroke="#5a6a44" stroke-width="1.1" opacity="0.24"/><path d="M881.5 409.8L882.3 406.7" stroke="#66704c" stroke-width="0.8" opacity="0.19"/><path d="M714.4 422.1L715.5 416.3" stroke="#5e6a48" stroke-width="0.8" opacity="0.20"/><path d="M696.5 375.3L697.1 370.1" stroke="#b0a88c" stroke-width="0.8" opacity="0.39"/><path d="M706.5 265.3L707.1 257.1" stroke="#a0ac80" stroke-width="0.7" opacity="0.41"/><path d="M745.5 328.9L747.2 323.4" stroke="#6a6450" stroke-width="1.0" opacity="0.19"/><path d="M902.1 407.3L902.1 403.5" stroke="#5e6a48" stroke-width="1.1" opacity="0.20"/><path d="M845.2 329.3L845.7 322.3" stroke="#5e6a48" stroke-width="1.0" opacity="0.19"/><path d="M714.3 401.7L713.1 399.0" stroke="#a8a488" stroke-width="1.1" opacity="0.43"/><path d="M826.1 251.6L828.0 249.5" stroke="#98a878" stroke-width="1.1" opacity="0.39"/><path d="M968.3 262.5L966.6 255.5" stroke="#5a6a44" stroke-width="0.7" opacity="0.23"/><path d="M796.1 392.8L798.7 385.3" stroke="#9f9a7c" stroke-width="0.9" opacity="0.27"/><path d="M944.8 249.9L946.9 242.1" stroke="#98a878" stroke-width="0.6" opacity="0.42"/><path d="M1009.1 324.7L1009.0 317.0" stroke="#9f9a7c" stroke-width="0.9" opacity="0.30"/><path d="M767.4 381.4L765.0 377.9" stroke="#6a6450" stroke-width="1.0" opacity="0.25"/><path d="M760.0 325.7L761.7 324.5" stroke="#aeb090" stroke-width="1.0" opacity="0.47"/><path d="M679.3 265.7L681.3 258.6" stroke="#a0ac80" stroke-width="0.9" opacity="0.49"/><path d="M822.2 276.5L822.4 267.7" stroke="#8fa070" stroke-width="1.0" opacity="0.30"/><path d="M870.9 234.0L870.1 230.2" stroke="#8fa070" stroke-width="1.1" opacity="0.37"/><path d="M775.8 300.8L773.6 296.2" stroke="#8fa070" stroke-width="0.7" opacity="0.26"/><path d="M761.6 338.5L762.0 334.0" stroke="#5e6a48" stroke-width="0.6" opacity="0.25"/><path d="M861.0 400.5L864.0 394.0" stroke="#6a6450" stroke-width="1.0" opacity="0.12"/><path d="M942.7 256.3L944.5 254.8" stroke="#a0ac80" stroke-width="0.9" opacity="0.38"/><path d="M788.2 350.1L785.4 347.4" stroke="#9f9a7c" stroke-width="1.0" opacity="0.47"/><path d="M841.3 428.8L845.7 425.9" stroke="#b0a88c" stroke-width="1.0" opacity="0.25"/><path d="M823.8 326.0L822.0 320.3" stroke="#a8a488" stroke-width="1.0" opacity="0.29"/><path d="M754.2 355.0L758.0 351.9" stroke="#b0a88c" stroke-width="0.6" opacity="0.40"/><path d="M728.8 356.9L727.0 348.5" stroke="#66704c" stroke-width="1.1" opacity="0.21"/><path d="M957.2 297.1L959.1 294.8" stroke="#5a6a44" stroke-width="0.7" opacity="0.20"/><path d="M673.9 234.9L676.7 231.6" stroke="#8fa070" stroke-width="0.7" opacity="0.41"/><path d="M920.9 444.6L917.6 441.0" stroke="#6a6450" stroke-width="0.7" opacity="0.16"/><path d="M732.1 347.0L733.7 339.2" stroke="#5e6a48" stroke-width="1.0" opacity="0.15"/><path d="M676.4 335.4L679.0 330.4" stroke="#aeb090" stroke-width="0.6" opacity="0.45"/><path d="M879.0 401.7L877.7 393.0" stroke="#5e6a48" stroke-width="0.8" opacity="0.12"/><path d="M810.6 386.6L807.1 381.2" stroke="#b0a88c" stroke-width="1.0" opacity="0.29"/><path d="M698.1 410.4L698.4 404.9" stroke="#6a6450" stroke-width="1.1" opacity="0.13"/><path d="M881.1 410.3L877.9 407.7" stroke="#6a6450" stroke-width="1.1" opacity="0.21"/><path d="M823.8 287.7L827.0 284.7" stroke="#98a878" stroke-width="0.6" opacity="0.39"/><path d="M947.0 447.7L947.7 444.0" stroke="#a8a488" stroke-width="0.9" opacity="0.48"/><path d="M709.3 348.4L710.9 345.1" stroke="#9f9a7c" stroke-width="1.1" opacity="0.43"/><path d="M968.3 420.0L968.6 412.3" stroke="#b0a88c" stroke-width="1.0" opacity="0.36"/><path d="M740.7 432.9L739.4 424.8" stroke="#a8a488" stroke-width="1.0" opacity="0.28"/><path d="M689.6 371.8L692.1 368.3" stroke="#aeb090" stroke-width="1.1" opacity="0.35"/><path d="M994.0 367.6L992.5 364.0" stroke="#aeb090" stroke-width="0.8" opacity="0.31"/><path d="M779.8 321.5L782.0 318.6" stroke="#b0a88c" stroke-width="1.1" opacity="0.37"/><path d="M933.1 442.5L932.1 439.1" stroke="#a8a488" stroke-width="1.0" opacity="0.37"/><path d="M722.9 380.4L722.5 373.8" stroke="#5e6a48" stroke-width="1.0" opacity="0.23"/><path d="M683.0 401.2L682.5 395.7" stroke="#9f9a7c" stroke-width="1.0" opacity="0.42"/><path d="M719.6 433.0L718.5 429.6" stroke="#66704c" stroke-width="0.7" opacity="0.12"/><path d="M903.2 244.7L905.8 242.0" stroke="#62744a" stroke-width="0.6" opacity="0.24"/><path d="M748.2 405.4L744.3 402.2" stroke="#5e6a48" stroke-width="0.9" opacity="0.19"/><path d="M919.1 235.1L914.7 230.9" stroke="#a0ac80" stroke-width="0.9" opacity="0.49"/><path d="M667.9 275.3L669.1 269.3" stroke="#5a6a44" stroke-width="1.0" opacity="0.18"/><path d="M998.2 241.7L1002.2 235.9" stroke="#5a6a44" stroke-width="0.7" opacity="0.21"/><path d="M728.3 284.6L726.5 283.0" stroke="#62744a" stroke-width="1.1" opacity="0.22"/><path d="M759.5 298.6L759.2 295.4" stroke="#a0ac80" stroke-width="1.1" opacity="0.42"/><path d="M969.4 388.4L968.1 383.5" stroke="#b0a88c" stroke-width="0.8" opacity="0.35"/><path d="M808.9 256.8L803.8 253.4" stroke="#62744a" stroke-width="1.0" opacity="0.20"/><path d="M1009.9 413.1L1006.4 409.2" stroke="#5e6a48" stroke-width="0.6" opacity="0.24"/><path d="M776.2 446.5L777.2 444.0" stroke="#6a6450" stroke-width="0.9" opacity="0.16"/><path d="M798.4 412.9L802.0 408.0" stroke="#a8a488" stroke-width="0.9" opacity="0.35"/><path d="M778.5 368.0L776.1 363.1" stroke="#66704c" stroke-width="1.0" opacity="0.15"/><path d="M963.8 303.6L964.4 297.2" stroke="#5e6a48" stroke-width="0.9" opacity="0.24"/><path d="M726.6 412.2L727.8 406.8" stroke="#6a6450" stroke-width="0.6" opacity="0.23"/><path d="M798.9 414.6L795.2 409.7" stroke="#9f9a7c" stroke-width="0.8" opacity="0.34"/><path d="M771.6 375.7L770.3 371.6" stroke="#a8a488" stroke-width="0.8" opacity="0.36"/><path d="M718.9 379.8L719.0 374.6" stroke="#9f9a7c" stroke-width="1.0" opacity="0.38"/><path d="M754.5 351.4L753.5 348.9" stroke="#66704c" stroke-width="0.7" opacity="0.21"/><path d="M779.1 279.4L775.1 274.9" stroke="#5a6a44" stroke-width="0.8" opacity="0.14"/><path d="M795.6 234.1L794.5 228.7" stroke="#62744a" stroke-width="0.8" opacity="0.24"/><path d="M749.6 418.6L750.2 415.0" stroke="#6a6450" stroke-width="0.6" opacity="0.19"/><path d="M737.3 421.0L737.0 417.5" stroke="#aeb090" stroke-width="1.1" opacity="0.37"/><path d="M928.9 229.9L928.6 223.3" stroke="#a0ac80" stroke-width="0.8" opacity="0.35"/><path d="M975.1 324.7L975.2 318.8" stroke="#6a6450" stroke-width="0.7" opacity="0.14"/><path d="M854.4 436.0L853.3 431.6" stroke="#aeb090" stroke-width="0.7" opacity="0.28"/><path d="M693.7 411.2L691.9 409.2" stroke="#6a6450" stroke-width="1.0" opacity="0.17"/><path d="M736.1 300.8L736.7 292.7" stroke="#5a6a44" stroke-width="1.0" opacity="0.25"/><path d="M968.7 257.3L968.8 252.3" stroke="#8fa070" stroke-width="0.7" opacity="0.32"/><path d="M775.3 282.4L776.0 274.3" stroke="#62744a" stroke-width="0.8" opacity="0.20"/><path d="M753.0 311.1L753.3 305.5" stroke="#b0a88c" stroke-width="0.9" opacity="0.26"/><path d="M793.5 407.5L795.7 405.3" stroke="#5e6a48" stroke-width="0.6" opacity="0.21"/><path d="M690.4 441.9L686.1 438.4" stroke="#aeb090" stroke-width="1.0" opacity="0.32"/><path d="M824.3 438.1L827.0 434.6" stroke="#aeb090" stroke-width="0.7" opacity="0.46"/><path d="M714.4 425.5L714.4 417.6" stroke="#b0a88c" stroke-width="0.9" opacity="0.37"/><path d="M740.0 416.0L742.0 413.9" stroke="#a8a488" stroke-width="0.7" opacity="0.37"/><path d="M698.7 235.5L700.5 232.5" stroke="#62744a" stroke-width="0.7" opacity="0.20"/><path d="M686.6 383.3L688.0 381.1" stroke="#b0a88c" stroke-width="1.0" opacity="0.47"/><path d="M774.1 283.1L771.7 278.2" stroke="#5a6a44" stroke-width="0.6" opacity="0.17"/><path d="M744.3 349.0L744.1 345.4" stroke="#66704c" stroke-width="0.8" opacity="0.15"/><path d="M680.4 304.6L677.8 299.2" stroke="#6a6450" stroke-width="0.7" opacity="0.18"/><path d="M787.4 395.8L790.5 392.8" stroke="#aeb090" stroke-width="0.8" opacity="0.32"/><path d="M736.7 331.7L739.4 325.6" stroke="#6a6450" stroke-width="0.6" opacity="0.24"/><path d="M874.2 445.5L876.8 443.1" stroke="#5e6a48" stroke-width="0.8" opacity="0.13"/><path d="M833.4 299.5L830.9 296.4" stroke="#5a6a44" stroke-width="0.8" opacity="0.21"/><path d="M925.4 249.9L924.8 246.0" stroke="#98a878" stroke-width="0.6" opacity="0.38"/><path d="M890.8 254.2L889.5 248.2" stroke="#8fa070" stroke-width="0.8" opacity="0.43"/><path d="M896.3 244.6L896.9 241.8" stroke="#62744a" stroke-width="0.6" opacity="0.13"/><path d="M971.2 250.8L971.5 244.9" stroke="#a0ac80" stroke-width="0.9" opacity="0.31"/><path d="M681.6 282.7L679.0 275.1" stroke="#5a6a44" stroke-width="1.0" opacity="0.24"/><path d="M852.0 278.9L850.3 276.8" stroke="#8fa070" stroke-width="0.9" opacity="0.39"/><path d="M746.3 395.8L745.1 392.4" stroke="#aeb090" stroke-width="0.7" opacity="0.41"/><path d="M864.2 251.7L861.5 246.2" stroke="#8fa070" stroke-width="0.6" opacity="0.43"/><path d="M752.0 361.2L747.3 357.2" stroke="#6a6450" stroke-width="0.8" opacity="0.13"/><path d="M696.1 397.8L693.4 393.1" stroke="#aeb090" stroke-width="0.6" opacity="0.45"/><path d="M939.9 257.9L937.3 253.7" stroke="#5a6a44" stroke-width="1.1" opacity="0.14"/><path d="M690.1 224.7L685.7 221.0" stroke="#62744a" stroke-width="1.0" opacity="0.24"/><path d="M887.2 269.6L890.2 265.0" stroke="#5a6a44" stroke-width="1.1" opacity="0.20"/><path d="M868.6 408.0L870.8 403.2" stroke="#9f9a7c" stroke-width="1.1" opacity="0.46"/><path d="M980.1 394.6L983.2 388.6" stroke="#66704c" stroke-width="0.9" opacity="0.17"/><path d="M991.4 341.5L992.4 334.2" stroke="#6a6450" stroke-width="1.1" opacity="0.13"/><path d="M957.1 277.1L956.8 273.0" stroke="#a0ac80" stroke-width="1.1" opacity="0.39"/><path d="M974.8 235.5L973.7 228.7" stroke="#62744a" stroke-width="0.8" opacity="0.23"/><path d="M697.1 373.4L695.3 366.0" stroke="#66704c" stroke-width="0.6" opacity="0.22"/><path d="M836.2 227.7L837.7 225.1" stroke="#8fa070" stroke-width="0.7" opacity="0.32"/><path d="M855.7 243.0L855.4 237.7" stroke="#a0ac80" stroke-width="0.7" opacity="0.27"/><path d="M895.7 408.8L896.7 405.5" stroke="#b0a88c" stroke-width="0.8" opacity="0.35"/><path d="M719.2 262.3L721.3 258.6" stroke="#62744a" stroke-width="0.8" opacity="0.15"/><path d="M970.2 405.1L973.2 400.7" stroke="#66704c" stroke-width="0.6" opacity="0.18"/><path d="M727.7 440.4L730.0 436.2" stroke="#9f9a7c" stroke-width="1.1" opacity="0.42"/><path d="M897.5 254.9L895.0 248.7" stroke="#8fa070" stroke-width="0.8" opacity="0.41"/><path d="M998.4 306.9L999.7 300.2" stroke="#a8a488" stroke-width="0.8" opacity="0.48"/><path d="M792.8 447.5L794.3 445.2" stroke="#6a6450" stroke-width="0.8" opacity="0.16"/><path d="M844.3 258.9L843.9 252.3" stroke="#62744a" stroke-width="1.1" opacity="0.13"/><path d="M975.4 257.1L976.1 250.7" stroke="#a0ac80" stroke-width="0.9" opacity="0.29"/><path d="M1006.8 367.7L1008.4 364.1" stroke="#aeb090" stroke-width="1.0" opacity="0.41"/><path d="M1000.2 386.5L998.0 380.4" stroke="#aeb090" stroke-width="1.0" opacity="0.46"/><path d="M787.1 256.0L790.0 252.3" stroke="#8fa070" stroke-width="0.9" opacity="0.38"/><path d="M981.0 358.5L984.3 351.5" stroke="#b0a88c" stroke-width="1.0" opacity="0.32"/><path d="M988.1 316.3L986.7 309.6" stroke="#aeb090" stroke-width="0.7" opacity="0.32"/><path d="M981.4 327.1L983.0 319.5" stroke="#66704c" stroke-width="0.7" opacity="0.12"/><path d="M960.4 318.3L959.9 314.9" stroke="#66704c" stroke-width="0.7" opacity="0.18"/><path d="M933.9 233.5L934.7 225.6" stroke="#a0ac80" stroke-width="0.7" opacity="0.32"/><path d="M691.2 349.6L693.0 342.8" stroke="#a8a488" stroke-width="0.7" opacity="0.48"/><path d="M728.0 389.5L724.5 385.0" stroke="#9f9a7c" stroke-width="0.8" opacity="0.35"/><path d="M783.5 422.1L780.2 417.3" stroke="#66704c" stroke-width="1.1" opacity="0.20"/><path d="M713.2 301.6L712.8 298.2" stroke="#5a6a44" stroke-width="0.8" opacity="0.19"/><path d="M959.3 404.6L955.7 399.2" stroke="#5e6a48" stroke-width="1.0" opacity="0.18"/><path d="M978.0 394.1L979.7 386.7" stroke="#5e6a48" stroke-width="1.0" opacity="0.20"/><path d="M800.0 429.2L802.6 423.5" stroke="#6a6450" stroke-width="0.7" opacity="0.15"/><path d="M744.5 245.5L748.3 242.5" stroke="#62744a" stroke-width="0.9" opacity="0.12"/><path d="M709.2 442.4L708.9 438.2" stroke="#66704c" stroke-width="0.6" opacity="0.15"/><path d="M946.4 233.1L942.5 228.3" stroke="#8fa070" stroke-width="1.1" opacity="0.48"/><path d="M850.6 276.7L853.3 272.2" stroke="#8fa070" stroke-width="0.6" opacity="0.38"/><path d="M936.2 230.5L935.6 224.6" stroke="#8fa070" stroke-width="0.6" opacity="0.32"/><path d="M705.9 313.4L704.7 304.9" stroke="#5e6a48" stroke-width="1.1" opacity="0.22"/><path d="M781.0 449.9L780.9 446.4" stroke="#aeb090" stroke-width="1.0" opacity="0.49"/><path d="M880.7 267.7L877.5 263.7" stroke="#98a878" stroke-width="1.0" opacity="0.27"/><path d="M672.7 402.0L675.3 395.6" stroke="#5e6a48" stroke-width="1.0" opacity="0.19"/><path d="M1003.7 395.2L1008.1 390.6" stroke="#6a6450" stroke-width="0.8" opacity="0.11"/><path d="M811.6 415.3L813.9 409.6" stroke="#6a6450" stroke-width="0.7" opacity="0.16"/><path d="M885.8 451.0L883.2 448.8" stroke="#9f9a7c" stroke-width="0.6" opacity="0.36"/><path d="M913.8 401.0L916.1 397.7" stroke="#aeb090" stroke-width="0.6" opacity="0.37"/><path d="M783.8 296.9L788.4 293.5" stroke="#62744a" stroke-width="0.7" opacity="0.18"/><path d="M754.2 228.9L756.6 221.5" stroke="#62744a" stroke-width="1.0" opacity="0.21"/><path d="M722.7 429.3L720.1 425.6" stroke="#aeb090" stroke-width="1.0" opacity="0.26"/><path d="M1003.7 243.7L1000.7 237.9" stroke="#5a6a44" stroke-width="0.8" opacity="0.23"/><path d="M933.1 431.0L931.9 428.7" stroke="#a8a488" stroke-width="1.0" opacity="0.27"/><path d="M993.9 324.8L997.2 321.3" stroke="#66704c" stroke-width="0.9" opacity="0.21"/><path d="M915.8 421.3L916.7 417.6" stroke="#5e6a48" stroke-width="0.8" opacity="0.21"/><path d="M971.7 362.7L971.7 359.0" stroke="#b0a88c" stroke-width="1.0" opacity="0.45"/><path d="M668.7 353.6L665.9 347.7" stroke="#6a6450" stroke-width="0.6" opacity="0.12"/><path d="M1004.7 407.8L1003.0 406.3" stroke="#b0a88c" stroke-width="0.6" opacity="0.44"/><path d="M810.2 233.5L810.0 227.7" stroke="#5a6a44" stroke-width="1.0" opacity="0.14"/><path d="M723.3 341.3L724.7 338.5" stroke="#5e6a48" stroke-width="0.6" opacity="0.12"/><path d="M891.3 243.6L892.3 237.5" stroke="#5a6a44" stroke-width="0.9" opacity="0.21"/><path d="M739.2 266.9L741.8 262.7" stroke="#8fa070" stroke-width="0.7" opacity="0.41"/><path d="M815.5 249.3L816.0 240.5" stroke="#98a878" stroke-width="0.7" opacity="0.27"/><path d="M972.0 449.3L970.9 446.2" stroke="#9f9a7c" stroke-width="0.9" opacity="0.29"/><path d="M1005.6 400.1L1004.0 398.5" stroke="#b0a88c" stroke-width="0.8" opacity="0.38"/><path d="M891.4 433.9L894.3 428.3" stroke="#5e6a48" stroke-width="0.6" opacity="0.21"/><path d="M902.6 418.6L905.2 415.2" stroke="#9f9a7c" stroke-width="1.0" opacity="0.36"/><path d="M754.4 292.8L753.2 288.2" stroke="#a0ac80" stroke-width="1.1" opacity="0.29"/><path d="M945.1 227.0L943.7 221.2" stroke="#62744a" stroke-width="0.8" opacity="0.24"/><path d="M933.6 401.5L936.8 395.1" stroke="#5e6a48" stroke-width="1.0" opacity="0.12"/><path d="M814.1 301.2L812.4 299.1" stroke="#98a878" stroke-width="0.9" opacity="0.38"/><path d="M853.3 438.8L856.0 435.8" stroke="#6a6450" stroke-width="0.7" opacity="0.12"/><path d="M766.4 431.6L765.4 429.0" stroke="#5e6a48" stroke-width="0.9" opacity="0.19"/><path d="M724.6 441.1L723.9 436.6" stroke="#a8a488" stroke-width="1.0" opacity="0.27"/><path d="M716.1 239.9L715.6 236.6" stroke="#8fa070" stroke-width="0.6" opacity="0.27"/><path d="M792.1 256.6L792.0 252.9" stroke="#62744a" stroke-width="0.8" opacity="0.24"/><path d="M978.4 282.4L979.8 277.6" stroke="#8fa070" stroke-width="1.0" opacity="0.47"/><path d="M826.4 297.9L825.7 293.8" stroke="#5a6a44" stroke-width="1.0" opacity="0.23"/><path d="M670.4 267.5L666.7 261.8" stroke="#62744a" stroke-width="0.7" opacity="0.20"/><path d="M716.7 246.2L715.2 237.7" stroke="#5a6a44" stroke-width="0.7" opacity="0.12"/><path d="M759.8 437.1L758.1 429.0" stroke="#5e6a48" stroke-width="1.0" opacity="0.13"/><path d="M754.1 307.9L751.1 304.2" stroke="#b0a88c" stroke-width="0.8" opacity="0.32"/><path d="M734.1 274.2L733.1 269.1" stroke="#62744a" stroke-width="0.6" opacity="0.15"/><path d="M701.5 310.4L699.9 305.9" stroke="#aeb090" stroke-width="0.8" opacity="0.28"/><path d="M913.2 245.5L913.1 241.8" stroke="#98a878" stroke-width="0.6" opacity="0.36"/><path d="M733.0 284.9L731.0 280.3" stroke="#98a878" stroke-width="0.7" opacity="0.27"/><path d="M968.1 444.4L964.2 439.6" stroke="#6a6450" stroke-width="0.9" opacity="0.12"/><path d="M843.6 296.4L843.5 292.8" stroke="#a0ac80" stroke-width="0.7" opacity="0.45"/><path d="M700.9 288.3L696.9 284.3" stroke="#62744a" stroke-width="0.7" opacity="0.18"/><path d="M670.8 373.5L667.4 371.0" stroke="#a8a488" stroke-width="0.7" opacity="0.38"/><path d="M892.3 257.2L896.4 253.5" stroke="#62744a" stroke-width="0.9" opacity="0.20"/><path d="M909.1 227.6L910.9 222.6" stroke="#98a878" stroke-width="1.1" opacity="0.32"/><path d="M957.4 293.7L955.5 290.1" stroke="#98a878" stroke-width="0.6" opacity="0.42"/><path d="M995.1 277.4L995.2 271.5" stroke="#62744a" stroke-width="0.7" opacity="0.20"/><path d="M980.5 268.1L978.9 262.8" stroke="#62744a" stroke-width="1.1" opacity="0.14"/><path d="M778.3 317.2L779.5 312.5" stroke="#9f9a7c" stroke-width="0.7" opacity="0.44"/><path d="M956.6 259.5L957.8 251.8" stroke="#8fa070" stroke-width="0.7" opacity="0.43"/><path d="M750.2 251.6L746.3 245.8" stroke="#8fa070" stroke-width="0.8" opacity="0.28"/><path d="M927.6 262.4L924.8 259.5" stroke="#62744a" stroke-width="0.9" opacity="0.14"/><path d="M744.1 258.5L748.2 255.3" stroke="#5a6a44" stroke-width="1.1" opacity="0.12"/><path d="M703.0 228.0L701.6 223.9" stroke="#5a6a44" stroke-width="0.9" opacity="0.17"/><path d="M960.7 408.8L960.8 401.9" stroke="#b0a88c" stroke-width="0.9" opacity="0.37"/><path d="M754.7 311.5L759.0 307.7" stroke="#66704c" stroke-width="0.9" opacity="0.16"/><path d="M901.4 240.8L902.7 233.7" stroke="#8fa070" stroke-width="1.1" opacity="0.33"/><path d="M820.9 301.9L825.0 298.4" stroke="#62744a" stroke-width="1.0" opacity="0.24"/><path d="M747.6 322.6L744.2 315.9" stroke="#b0a88c" stroke-width="0.7" opacity="0.48"/><path d="M711.1 275.0L709.8 271.3" stroke="#98a878" stroke-width="0.9" opacity="0.47"/><path d="M824.1 300.0L822.8 294.2" stroke="#62744a" stroke-width="0.8" opacity="0.13"/><path d="M673.1 378.8L672.4 375.0" stroke="#66704c" stroke-width="0.9" opacity="0.23"/><path d="M1001.3 269.0L999.3 262.2" stroke="#98a878" stroke-width="1.0" opacity="0.40"/><path d="M969.8 358.8L967.5 357.2" stroke="#6a6450" stroke-width="0.6" opacity="0.19"/><path d="M943.2 415.7L942.1 412.8" stroke="#b0a88c" stroke-width="1.0" opacity="0.32"/><path d="M1008.6 228.4L1010.5 226.6" stroke="#5a6a44" stroke-width="0.6" opacity="0.18"/><path d="M787.7 290.8L791.2 286.2" stroke="#98a878" stroke-width="0.7" opacity="0.32"/><path d="M688.9 236.0L684.8 230.4" stroke="#62744a" stroke-width="0.8" opacity="0.16"/><path d="M732.2 436.7L728.8 433.7" stroke="#aeb090" stroke-width="1.0" opacity="0.35"/><path d="M746.4 406.5L742.5 402.2" stroke="#5e6a48" stroke-width="0.8" opacity="0.22"/><path d="M829.1 410.6L831.9 405.8" stroke="#aeb090" stroke-width="0.7" opacity="0.28"/><path d="M868.5 248.7L866.2 243.2" stroke="#a0ac80" stroke-width="0.8" opacity="0.38"/><path d="M686.8 276.4L686.8 273.3" stroke="#8fa070" stroke-width="0.9" opacity="0.42"/><path d="M979.0 270.9L980.1 266.4" stroke="#98a878" stroke-width="0.8" opacity="0.27"/><path d="M784.3 385.2L786.2 379.0" stroke="#66704c" stroke-width="1.0" opacity="0.15"/><path d="M686.3 363.5L684.4 361.9" stroke="#5e6a48" stroke-width="0.9" opacity="0.13"/><path d="M751.8 230.9L753.7 227.1" stroke="#62744a" stroke-width="0.8" opacity="0.20"/><path d="M774.5 241.2L775.7 234.5" stroke="#98a878" stroke-width="0.9" opacity="0.31"/><path d="M743.8 296.9L745.5 291.8" stroke="#62744a" stroke-width="1.0" opacity="0.18"/><path d="M684.7 400.1L686.5 398.3" stroke="#b0a88c" stroke-width="0.9" opacity="0.27"/><path d="M679.2 374.6L681.0 367.1" stroke="#a8a488" stroke-width="0.9" opacity="0.29"/><path d="M678.0 432.3L678.3 425.3" stroke="#66704c" stroke-width="0.9" opacity="0.13"/><path d="M955.2 262.7L956.7 259.5" stroke="#a0ac80" stroke-width="1.0" opacity="0.34"/><path d="M698.7 439.9L701.3 432.5" stroke="#b0a88c" stroke-width="0.9" opacity="0.49"/><path d="M766.9 330.5L769.2 324.4" stroke="#b0a88c" stroke-width="0.8" opacity="0.48"/><path d="M967.1 341.5L962.9 338.2" stroke="#6a6450" stroke-width="1.0" opacity="0.13"/><path d="M778.1 263.6L776.5 256.6" stroke="#a0ac80" stroke-width="0.6" opacity="0.26"/><path d="M747.2 302.7L744.6 296.3" stroke="#98a878" stroke-width="0.8" opacity="0.49"/><path d="M960.6 411.5L959.7 407.2" stroke="#9f9a7c" stroke-width="0.7" opacity="0.35"/><path d="M993.2 226.9L995.6 221.1" stroke="#5a6a44" stroke-width="0.9" opacity="0.22"/><path d="M685.1 427.7L683.3 425.0" stroke="#9f9a7c" stroke-width="1.0" opacity="0.35"/><path d="M713.2 347.5L715.3 343.9" stroke="#b0a88c" stroke-width="1.0" opacity="0.46"/><path d="M715.1 438.9L717.0 432.1" stroke="#5e6a48" stroke-width="1.0" opacity="0.22"/><path d="M1005.8 440.7L1005.5 434.9" stroke="#5e6a48" stroke-width="0.8" opacity="0.21"/><path d="M689.2 251.1L693.3 246.4" stroke="#a0ac80" stroke-width="0.6" opacity="0.27"/><path d="M923.4 269.4L922.6 263.8" stroke="#62744a" stroke-width="0.9" opacity="0.15"/><path d="M976.6 331.7L979.3 324.6" stroke="#9f9a7c" stroke-width="0.7" opacity="0.39"/><path d="M870.3 413.9L870.1 407.8" stroke="#b0a88c" stroke-width="0.8" opacity="0.30"/><path d="M792.7 443.5L789.3 439.1" stroke="#5e6a48" stroke-width="0.9" opacity="0.18"/><path d="M675.2 254.0L671.5 247.5" stroke="#8fa070" stroke-width="0.8" opacity="0.45"/><path d="M743.9 394.6L741.0 388.5" stroke="#6a6450" stroke-width="0.8" opacity="0.17"/><path d="M912.6 436.9L911.5 433.2" stroke="#b0a88c" stroke-width="1.0" opacity="0.37"/><path d="M670.7 423.5L669.6 417.2" stroke="#5e6a48" stroke-width="1.1" opacity="0.14"/><path d="M967.5 306.8L964.2 300.3" stroke="#b0a88c" stroke-width="1.1" opacity="0.38"/><path d="M860.7 256.9L863.5 251.8" stroke="#8fa070" stroke-width="0.9" opacity="0.42"/><path d="M747.9 273.6L744.3 270.3" stroke="#62744a" stroke-width="0.7" opacity="0.24"/><path d="M747.3 412.2L745.4 409.1" stroke="#6a6450" stroke-width="0.7" opacity="0.21"/><path d="M741.7 415.5L741.8 409.9" stroke="#a8a488" stroke-width="0.6" opacity="0.36"/><path d="M691.1 406.5L687.9 401.9" stroke="#b0a88c" stroke-width="0.8" opacity="0.50"/><path d="M735.8 260.9L736.7 255.7" stroke="#98a878" stroke-width="0.8" opacity="0.41"/><path d="M716.3 359.0L715.3 355.7" stroke="#aeb090" stroke-width="0.9" opacity="0.44"/><path d="M830.7 287.5L830.4 281.4" stroke="#5a6a44" stroke-width="0.8" opacity="0.14"/><path d="M799.7 239.9L800.8 236.9" stroke="#8fa070" stroke-width="0.8" opacity="0.42"/><path d="M719.7 421.9L716.1 419.5" stroke="#6a6450" stroke-width="0.9" opacity="0.18"/><path d="M996.4 365.9L997.3 362.2" stroke="#5e6a48" stroke-width="0.7" opacity="0.24"/><path d="M793.6 419.0L794.6 411.4" stroke="#66704c" stroke-width="0.7" opacity="0.22"/></g>
  <ellipse cx="885" cy="402" rx="80" ry="9" fill="#4a4535" opacity=".3" filter="url(#bl3)"/>
  <g filter="url(#bl1)" fill="#f7f3ee">
    <path d="M773 381C771 372 774 360 780 356C788 346 800 338 812 333C822 325 835 319 846 317C851 316 855 316 857.5 314C855 305 856 294 859 285C861 278 865 269 868 264.5C874 266 879 269 883 272C887 270 892 270 896 271C901 268 906 265.5 911 265.5C917 271 922 280 924.5 291C927 300 928 309 928 316.5C936 326 944 335 948 345.5C953 357 957 368 956.7 380C958 390 952 402 938 403.3C926 404 918 398 917.7 390C914 386 908 386 904.6 386C898 386 890 388 888.7 392C886 400 878 403.3 870 403.3C858 403 851 395 851 388C845 388 838 386 832 386C812 384 790 384 773 381Z"/>
  </g>
  <path d="M851 386C853 378 857 372 862 369" stroke="#d8cabc" stroke-width="2" fill="none" opacity=".6" filter="url(#bl1)"/>
  <path d="M917 388C918 378 925 370 934 366" stroke="#d8cabc" stroke-width="2" fill="none" opacity=".6" filter="url(#bl1)"/>
  <path d="M888 391C892 385 898 384 904 386" stroke="#cdbfb0" stroke-width="1.5" fill="none" opacity=".6" filter="url(#bl1)"/>
  <path d="M866 340C878 350 905 350 922 334" stroke="#e2d5c8" stroke-width="3" fill="none" opacity=".5" filter="url(#bl3)"/>
  <ellipse cx="915" cy="368" rx="30" ry="16" fill="#e9dccf" opacity=".45" filter="url(#bl3)"/>
  <ellipse cx="815" cy="372" rx="30" ry="8" fill="#e0d4c6" opacity=".4" filter="url(#bl3)"/>
  <ellipse cx="818" cy="388" rx="40" ry="11" fill="#98a27a" opacity=".55" filter="url(#bl3)"/>
  <ellipse cx="905" cy="365" rx="28" ry="18" fill="url(#dogsh)" opacity=".55"/>
  <ellipse cx="842" cy="378" rx="22" ry="8" fill="url(#dogsh)" opacity=".5"/>
  <ellipse cx="932" cy="345" rx="12" ry="20" fill="url(#dogsh)" opacity=".35"/>
  <path d="M869 268Q873 273 876 280" stroke="#ddd2c6" stroke-width="1.6" fill="none" filter="url(#bl1)"/><path d="M910 268Q905 274 902 281" stroke="#ddd2c6" stroke-width="1.6" fill="none" filter="url(#bl1)"/>
  <path d="M905 285Q909 277 912.5 275Q915.5 283 913 293Q908 291 905 285Z" fill="#e08a7c" filter="url(#bl1)"/>
  <ellipse cx="869.5" cy="314.5" rx="2" ry="1.1" fill="#6a5a55"/>
  <ellipse cx="889" cy="315.5" rx="2.3" ry="1.2" fill="#6a5a55"/>
  <ellipse cx="869.5" cy="334" rx="3.4" ry="2.5" fill="#9a6a60"/>
  <g fill="none"><path d="M800.0 376.5L806.1 364.7" stroke="#9aa27c" stroke-width="0.9" opacity="0.57"/><path d="M820.6 384.0L818.6 371.0" stroke="#9aa27c" stroke-width="1.1" opacity="0.51"/><path d="M863.9 375.8L864.8 367.8" stroke="#9aa27c" stroke-width="1.1" opacity="0.49"/><path d="M808.3 384.8L811.9 376.6" stroke="#9aa27c" stroke-width="0.7" opacity="0.71"/><path d="M800.2 388.3L798.6 374.9" stroke="#8a9a6a" stroke-width="0.8" opacity="0.42"/><path d="M850.9 376.8L847.6 369.8" stroke="#7d8c5e" stroke-width="0.8" opacity="0.74"/><path d="M860.9 375.5L861.2 368.4" stroke="#8a9a6a" stroke-width="1.1" opacity="0.45"/><path d="M854.1 373.3L856.4 363.6" stroke="#7d8c5e" stroke-width="0.7" opacity="0.71"/><path d="M845.8 391.7L839.7 379.3" stroke="#8a9a6a" stroke-width="0.8" opacity="0.41"/><path d="M804.1 394.9L803.9 387.6" stroke="#8a9a6a" stroke-width="0.8" opacity="0.61"/><path d="M837.9 404.0L842.0 396.1" stroke="#7d8c5e" stroke-width="0.9" opacity="0.54"/><path d="M815.7 387.9L816.8 381.8" stroke="#8a9a6a" stroke-width="0.8" opacity="0.71"/><path d="M849.8 392.7L849.2 381.4" stroke="#9aa27c" stroke-width="1.0" opacity="0.41"/><path d="M815.1 398.1L814.6 387.5" stroke="#8a9a6a" stroke-width="1.0" opacity="0.52"/><path d="M810.8 403.1L816.0 391.3" stroke="#9aa27c" stroke-width="1.0" opacity="0.57"/><path d="M839.5 377.2L839.5 366.0" stroke="#9aa27c" stroke-width="1.0" opacity="0.40"/><path d="M850.2 385.7L851.0 374.3" stroke="#9aa27c" stroke-width="1.0" opacity="0.52"/><path d="M819.0 391.1L814.4 378.1" stroke="#7d8c5e" stroke-width="0.8" opacity="0.75"/><path d="M792.7 393.9L787.5 384.3" stroke="#9aa27c" stroke-width="1.0" opacity="0.51"/><path d="M846.2 380.7L842.6 370.4" stroke="#9aa27c" stroke-width="0.9" opacity="0.50"/><path d="M862.4 374.7L865.9 361.7" stroke="#8a9a6a" stroke-width="0.9" opacity="0.43"/><path d="M812.6 381.7L814.7 371.9" stroke="#8a9a6a" stroke-width="0.7" opacity="0.67"/><path d="M782.1 381.1L784.6 374.7" stroke="#7d8c5e" stroke-width="1.1" opacity="0.68"/><path d="M780.0 386.8L776.0 378.8" stroke="#9aa27c" stroke-width="0.8" opacity="0.42"/><path d="M797.3 397.8L797.4 390.2" stroke="#9aa27c" stroke-width="1.2" opacity="0.55"/><path d="M828.0 398.7L827.5 386.6" stroke="#7d8c5e" stroke-width="0.9" opacity="0.73"/><path d="M818.3 375.9L814.2 364.7" stroke="#9aa27c" stroke-width="0.8" opacity="0.61"/><path d="M856.8 396.3L854.8 383.0" stroke="#7d8c5e" stroke-width="1.1" opacity="0.49"/><path d="M821.6 386.7L819.1 381.0" stroke="#8a9a6a" stroke-width="0.8" opacity="0.61"/><path d="M857.9 374.7L860.6 366.8" stroke="#9aa27c" stroke-width="0.8" opacity="0.45"/><path d="M851.8 376.0L851.8 368.5" stroke="#7d8c5e" stroke-width="0.8" opacity="0.72"/><path d="M793.9 400.3L792.0 392.7" stroke="#8a9a6a" stroke-width="0.8" opacity="0.72"/><path d="M832.1 404.0L833.6 392.0" stroke="#9aa27c" stroke-width="1.0" opacity="0.74"/><path d="M792.8 385.7L791.0 376.2" stroke="#8a9a6a" stroke-width="1.1" opacity="0.48"/><path d="M817.4 399.2L823.0 386.7" stroke="#8a9a6a" stroke-width="1.0" opacity="0.44"/><path d="M803.2 401.4L808.4 389.1" stroke="#7d8c5e" stroke-width="0.9" opacity="0.49"/><path d="M808.0 390.3L809.1 378.2" stroke="#8a9a6a" stroke-width="0.9" opacity="0.43"/><path d="M809.2 375.7L809.2 361.9" stroke="#7d8c5e" stroke-width="1.2" opacity="0.53"/><path d="M825.7 382.4L823.8 376.4" stroke="#8a9a6a" stroke-width="1.2" opacity="0.56"/><path d="M808.2 397.7L810.8 384.4" stroke="#7d8c5e" stroke-width="1.2" opacity="0.62"/><path d="M825.2 400.5L823.7 389.2" stroke="#9aa27c" stroke-width="0.8" opacity="0.50"/><path d="M841.6 395.4L840.7 384.7" stroke="#8a9a6a" stroke-width="1.0" opacity="0.47"/><path d="M821.7 375.9L823.9 363.4" stroke="#9aa27c" stroke-width="0.8" opacity="0.44"/><path d="M790.9 391.2L788.3 380.1" stroke="#7d8c5e" stroke-width="0.7" opacity="0.50"/><path d="M859.7 394.9L858.2 384.9" stroke="#9aa27c" stroke-width="1.0" opacity="0.69"/><path d="M773.3 378.7L775.7 371.7" stroke="#8a9a6a" stroke-width="0.8" opacity="0.44"/><path d="M829.4 396.4L831.8 383.0" stroke="#7d8c5e" stroke-width="0.9" opacity="0.64"/><path d="M778.6 399.4L773.3 386.6" stroke="#9aa27c" stroke-width="1.1" opacity="0.58"/><path d="M813.9 400.7L811.1 395.2" stroke="#8a9a6a" stroke-width="1.2" opacity="0.62"/><path d="M836.0 377.3L836.6 365.5" stroke="#7d8c5e" stroke-width="1.2" opacity="0.53"/><path d="M825.3 377.4L822.5 370.7" stroke="#8a9a6a" stroke-width="0.8" opacity="0.58"/><path d="M828.3 390.5L828.7 381.2" stroke="#8a9a6a" stroke-width="1.1" opacity="0.48"/><path d="M785.8 402.5L788.1 397.0" stroke="#7d8c5e" stroke-width="0.8" opacity="0.43"/><path d="M818.8 384.8L821.1 376.4" stroke="#8a9a6a" stroke-width="1.2" opacity="0.75"/><path d="M776.8 404.6L773.3 397.5" stroke="#8a9a6a" stroke-width="0.8" opacity="0.49"/><path d="M847.9 396.9L844.3 388.9" stroke="#7d8c5e" stroke-width="0.7" opacity="0.67"/><path d="M815.8 394.6L815.3 387.3" stroke="#8a9a6a" stroke-width="1.1" opacity="0.55"/><path d="M788.3 373.5L790.6 366.9" stroke="#9aa27c" stroke-width="1.1" opacity="0.69"/><path d="M849.4 381.4L846.7 375.7" stroke="#9aa27c" stroke-width="1.1" opacity="0.65"/><path d="M822.0 377.5L821.3 366.2" stroke="#9aa27c" stroke-width="0.9" opacity="0.48"/></g>
  <ellipse cx="806" cy="453.5" rx="5" ry="2.3" fill="#d94a8a"/>
</svg>
<svg class="a" style="left:855px;top:140px" width="131" height="90" viewBox="0 0 131 89">
  <path d="M40.8 50.9C37 20 45 0 62 0C80 0 87 20 77 48C95 36 108 33 116 33.4C127 34 131 44 130.7 52C130 70 95 89 60 89C30 89 0 70 0 52C0 42 8 37 17 37C27 37 36 43 40.8 50.9Z" fill="#468c7c"/>
</svg>
<svg class="a" style="left:740px;top:230px" width="140" height="42" viewBox="0 0 140 42"><g font-family="Liberation Serif" font-weight="bold" font-style="italic" font-size="30"><text x="10.5" y="33.8" fill="#e5383b" stroke="#e5383b" stroke-width="3.6" stroke-linejoin="round" textLength="116" lengthAdjust="spacingAndGlyphs">Love it .</text><text x="10.5" y="33.8" fill="#ff9ad6" stroke="#ff9ad6" stroke-width="1" stroke-linejoin="round" textLength="116" lengthAdjust="spacingAndGlyphs">Love it .</text></g></svg>
<div class="a" style="left:763px;top:54px;width:76px;height:30px;background:#fff;border-radius:8px;box-shadow:0 2px 6px rgba(30,40,60,.12)"></div>
<svg class="a" style="left:763px;top:54px" width="76" height="30" viewBox="763 54 76 30" fill="none" stroke="#15181c" stroke-width="1.6" stroke-linecap="round" stroke-linejoin="round">
  <path d="M785 75H780.4a1.8 1.8 0 0 1-1.8-1.8V64.8A1.8 1.8 0 0 1 780.4 63H788.5a1.8 1.8 0 0 1 1.8 1.8V69.6"/>
  <path d="M779 73.2Q780.2 71.6 781.6 70.4Q783.4 71.6 785 73.2"/>
  <circle cx="786.5" cy="66.8" r="1.35" fill="#15181c" stroke="none"/>
  <path d="M789.6 71.5V77.1M786.8 74.3H792.4"/>
  <circle cx="811.7" cy="68.8" r="1.5" fill="#15181c" stroke="none"/>
  <circle cx="816.8" cy="68.8" r="1.5" fill="#15181c" stroke="none"/>
  <circle cx="821.9" cy="68.8" r="1.5" fill="#15181c" stroke="none"/>
</svg>
<!-- right float panel -->
<div class="a" style="left:1223px;top:51px;width:51px;height:104px;background:#fff;border-radius:10px;box-shadow:0 1px 8px rgba(30,40,60,.07)"></div>
<svg class="a" style="left:1223px;top:51px" width="51" height="104" viewBox="1223 51 51 104" fill="none" stroke="#4a505a" stroke-width="1.4" stroke-linecap="round" stroke-linejoin="round">
  <rect x="1241.8" y="65.5" width="12.5" height="12.5" rx="1.5"/>
  <path d="M1242.5 72.5L1248.5 66.5M1244.5 77L1253.5 68M1248.5 77.5L1253.8 72.2" stroke-width="1"/>
  <path d="M1243 118.5V127.5H1251.5"/>
  <path d="M1243.5 117H1251.5M1243.5 117L1245 115.6M1243.5 117L1245 118.4M1251.5 117L1250 115.6M1251.5 117L1250 118.4"/>
  <path d="M1254 119V127.5M1254 119L1252.6 120.5M1254 119L1255.4 120.5M1254 127.5L1252.6 126M1254 127.5L1255.4 126"/>
</svg>
<div class="a" style="left:1223px;top:84.7px;width:51px;text-align:center;font-size:9px;color:#6b717b;line-height:11px">Backgr…</div>
<div class="a" style="left:1223px;top:135.5px;width:51px;text-align:center;font-size:9px;color:#6b717b;line-height:11px">Resize</div>
<div id="bot" class="a"></div>
<svg class="a" style="left:321px;top:554px" width="959" height="34" viewBox="321 554 959 34" fill="none" stroke="#15181c" stroke-width="1.6" stroke-linecap="round" stroke-linejoin="round">
  <rect x="336.2" y="572.4" width="8.5" height="8.5" rx="2"/>
  <path d="M339.4 569.3H345.5Q348.3 569.3 348.3 572.1V578.4"/>
  <path d="M340.45 575.1V578.5M338.75 576.8H342.15" stroke-width="1.7"/>
  <path d="M371.5 573H384.5M373.4 573.5L374.4 581.4H381.9L382.9 573.5M375.8 571Q378.2 568.8 380.6 571" stroke="#d0d7df"/>
  <path d="M400.5 568V582" stroke="#dfe3e8" stroke-width="1.1"/>
  <path d="M424.3 581.2H420.2a2 2 0 0 1-2-2V571.2a2 2 0 0 1 2-2H428a2 2 0 0 1 2 2V575.4"/>
  <path d="M428.6 578.2V583.2M426.1 580.7H431.1" stroke-width="1.5"/>
  <path d="M1148.6 570.2L1143.4 575.5L1148.6 580.8" stroke="#c6ced8" stroke-width="1.3"/>
  <path d="M1209 570.2L1214.2 575.5L1209 580.8" stroke="#c6ced8" stroke-width="1.3"/>
  <path d="M1237.3 568.5V582" stroke="#dfe3e8" stroke-width="1.1"/>
  <rect x="1253.7" y="574.4" width="11.6" height="7.1" rx="1.5" stroke-width="1.7"/>
  <path d="M1256.5 571.3L1259.4 568.9L1262.2 571.3" stroke-width="1.5"/>
</svg>
<div class="a" style="left:437.3px;top:567.3px;font-size:13px;color:#15181c;line-height:16px;-webkit-text-stroke:0.2px #15181c">Add page</div>
<div class="a" style="left:1172.3px;top:568.2px;font-size:12.5px;color:#15181c;line-height:16px;letter-spacing:-1.3px;-webkit-text-stroke:0.25px #15181c">1/1</div>

</body></html>
